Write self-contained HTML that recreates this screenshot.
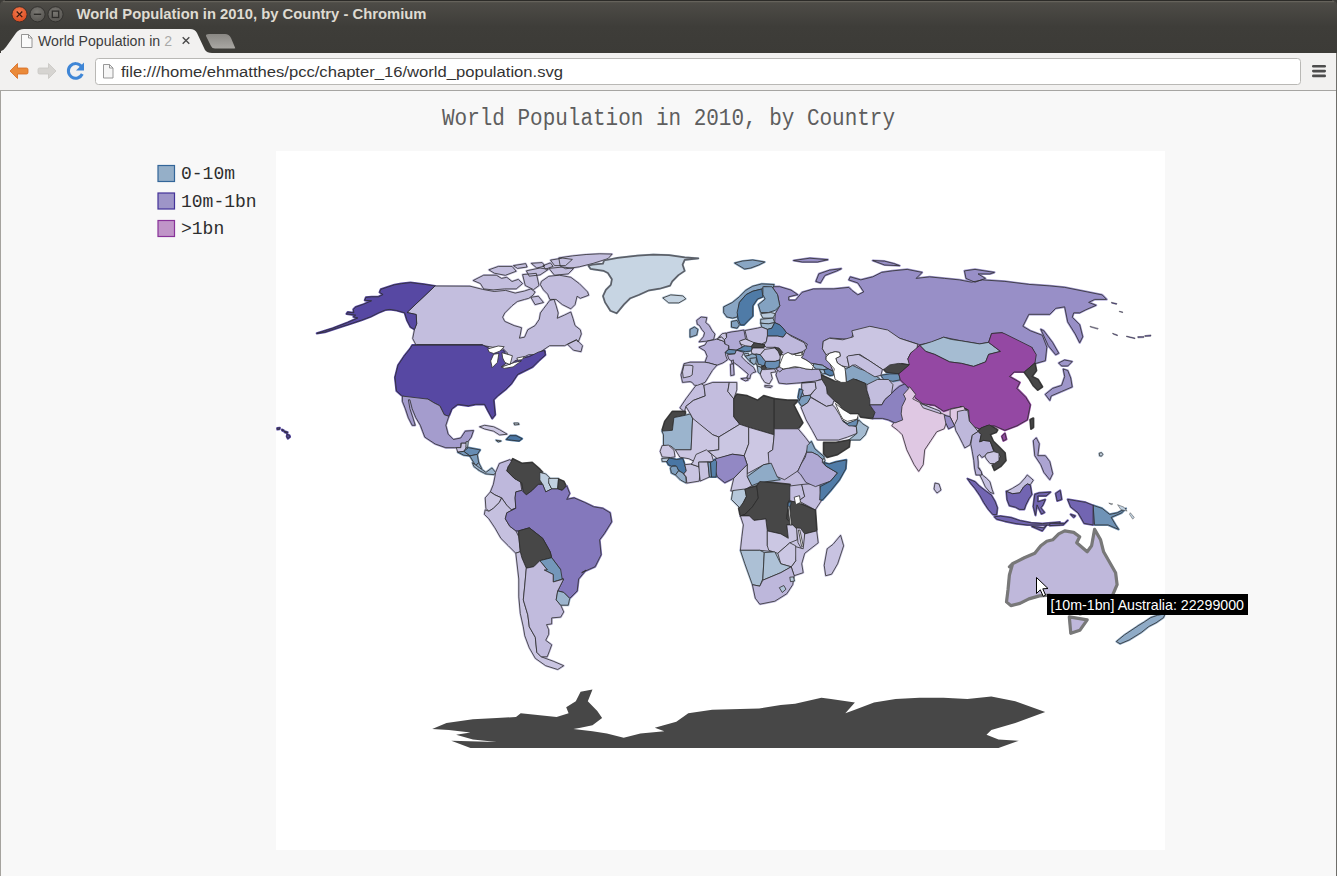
<!DOCTYPE html>
<html><head><meta charset="utf-8">
<style>
html,body{margin:0;padding:0;width:1337px;height:876px;overflow:hidden;background:#f8f8f8;font-family:"Liberation Sans",sans-serif;}
#root{position:absolute;left:0;top:0;width:1337px;height:876px;}
</style></head><body><div id="root">
<svg width="1337" height="876" viewBox="0 0 1337 876" style="position:absolute;left:0;top:0">
<defs>
<linearGradient id="tb" x1="0" y1="0" x2="0" y2="1"><stop offset="0" stop-color="#4f4d48"/><stop offset="0.5" stop-color="#3e3d39"/><stop offset="1" stop-color="#3c3b37"/></linearGradient>
<radialGradient id="cls" cx="0.45" cy="0.35" r="0.7"><stop offset="0" stop-color="#f47d50"/><stop offset="1" stop-color="#d9471d"/></radialGradient>
<radialGradient id="gbt" cx="0.45" cy="0.35" r="0.7"><stop offset="0" stop-color="#7a7873"/><stop offset="1" stop-color="#55534f"/></radialGradient>
<linearGradient id="ntab" x1="0" y1="0" x2="0" y2="1"><stop offset="0" stop-color="#8a8884"/><stop offset="1" stop-color="#a9a7a3"/></linearGradient>
</defs>
<!-- window background/title bar -->
<rect x="0" y="0" width="1337" height="53" fill="#3c3b37"/>
<path d="M0 53 V6 Q0 0 6 0 H1331 Q1337 0 1337 6 V53 Z" fill="url(#tb)"/>
<rect x="5" y="0" width="1327" height="1" fill="#2c2b28"/><rect x="3" y="1.2" width="1331" height="1" fill="#6b6860"/>
<!-- title buttons -->
<circle cx="19.5" cy="14.3" r="7.6" fill="url(#cls)" stroke="#2c2b28" stroke-width="0.8"/>
<path d="M16.7 11.5 L22.3 17.1 M22.3 11.5 L16.7 17.1" stroke="#3a1a10" stroke-width="1.3"/>
<circle cx="37.5" cy="14.3" r="7.6" fill="url(#gbt)" stroke="#2c2b28" stroke-width="0.8"/>
<path d="M33.8 14.3 H41.2" stroke="#2e2d2a" stroke-width="1.4"/>
<circle cx="55.5" cy="14.3" r="7.6" fill="url(#gbt)" stroke="#2c2b28" stroke-width="0.8"/>
<rect x="52.3" y="11.1" width="6.4" height="6.4" fill="none" stroke="#2e2d2a" stroke-width="1.3"/>
<text x="76.5" y="19.4" font-family="Liberation Sans" font-weight="bold" font-size="14.2" fill="#dfdbd2" textLength="350" lengthAdjust="spacingAndGlyphs">World Population in 2010, by Country - Chromium</text>
<!-- tab -->
<path d="M1 53 L1 51 Q4 50 6 47 L16 33 Q19 29 24 29 H190 Q195 29 197 33 L205 50 Q207 53 212 53 Z" fill="#f2f1f0"/>
<path d="M209 34 H225 Q229 34 231 38 L235 47.5 Q236 48.5 234 48.5 H215 Q212 48.5 211 46 L206 36 Q205.5 34 209 34 Z" fill="url(#ntab)"/>
<!-- tab page icon -->
<path d="M21.5 34.5 H28.5 L32 38 V47.5 H21.5 Z" fill="#fafafa" stroke="#8a8a8a" stroke-width="0.9"/>
<path d="M28.5 34.5 V38 H32" fill="none" stroke="#8a8a8a" stroke-width="0.9"/>
<text x="38" y="46" font-family="Liberation Sans" font-size="14" fill="#3c3c3c" textLength="134" lengthAdjust="spacingAndGlyphs">World Population in 2</text>
<rect x="160" y="30" width="18" height="22" fill="#f2f1f0" opacity="0.6"/>
<path d="M182.7 37.2 L189.3 43.8 M189.3 37.2 L182.7 43.8" stroke="#4a4a4a" stroke-width="1.4"/>
<!-- toolbar -->
<rect x="0" y="53" width="1337" height="37" fill="#f2f1f0"/>
<rect x="0" y="90" width="1337" height="1" fill="#a6a5a2"/>
<!-- back arrow -->
<path d="M10 71 L17.5 63.5 L17.5 68 H26.5 Q28 68 28 69.5 V72.5 Q28 74 26.5 74 H17.5 V78.5 Z" fill="#ea8a3a" stroke="#d86a1e" stroke-width="0.8"/>
<!-- fwd arrow -->
<path d="M56 71 L48.5 63.5 L48.5 68 H39.5 Q38 68 38 69.5 V72.5 Q38 74 39.5 74 H48.5 V78.5 Z" fill="#d6d4d1" stroke="#c8c6c3" stroke-width="0.8"/>
<!-- reload -->
<path d="M81.5 66.5 A7.3 7.3 0 1 0 82.3 74" fill="none" stroke="#3f86d6" stroke-width="3"/>
<path d="M84 62.5 V70.5 H76 Z" fill="#3f86d6"/>
<!-- url box -->
<rect x="95.5" y="58.5" width="1205" height="26" rx="3" ry="3" fill="#ffffff" stroke="#b9b8b5" stroke-width="1"/>
<path d="M103.5 64.5 H109.5 L113 68 V78 H103.5 Z" fill="#f6f6f6" stroke="#8c8c8c" stroke-width="0.9"/>
<path d="M109.5 64.5 V68 H113" fill="none" stroke="#8c8c8c" stroke-width="0.9"/>
<text x="121" y="76.5" font-family="Liberation Sans" font-size="15.5" fill="#333333" textLength="442" lengthAdjust="spacingAndGlyphs">file:///home/ehmatthes/pcc/chapter_16/world_population.svg</text>
<!-- menu -->
<rect x="1312" y="65" width="14" height="2.6" rx="1.3" fill="#4d4d4d"/>
<rect x="1312" y="69.8" width="14" height="2.6" rx="1.3" fill="#4d4d4d"/>
<rect x="1312" y="74.6" width="14" height="2.6" rx="1.3" fill="#4d4d4d"/>
<!-- window borders -->
<rect x="0" y="91" width="1" height="785" fill="#a5a39e"/>
<rect x="1336" y="53" width="1" height="823" fill="#6f6e6a"/>
<!-- chart -->
<rect x="276" y="151" width="889" height="699" fill="#ffffff"/>
<text x="442" y="125.2" font-family="Liberation Mono" font-size="23.5" fill="#5e5e5e" textLength="453" lengthAdjust="spacingAndGlyphs">World Population in 2010, by Country</text>
<g font-family="Liberation Mono" font-size="18" fill="#2e2e2e">
<rect x="158" y="165.5" width="16.5" height="16" fill="#95afc8" stroke="#336699" stroke-width="1.2"/>
<text x="181" y="179.3">0-10m</text>
<rect x="158" y="193" width="16.5" height="16" fill="#9e95c8" stroke="#443399" stroke-width="1.2"/>
<text x="181" y="206.8">10m-1bn</text>
<rect x="158" y="220.5" width="16.5" height="16" fill="#c095c8" stroke="#883399" stroke-width="1.2"/>
<text x="181" y="234.3">&gt;1bn</text>
</g>
<g stroke-width="2.2" stroke-linejoin="round"><path d="M889.0 377.0 L906.0 377.0 L907.0 391.0 L889.0 391.0Z" fill="#c3bede" stroke="none"/>
<path d="M939.0 408.0 L953.0 406.0 L953.0 417.0 L939.0 417.0Z" fill="#dfc8e3" stroke="none"/>
<path d="M768.0 471.0 L806.0 469.0 L807.0 488.0 L768.0 487.0Z" fill="#c0badc" stroke="none"/>
<path d="M789.8 539.8 L798.7 539.8 L805.5 550.3 L795.7 550.3 L789.8 544.3Z" fill="#c7c2e1" stroke="none"/>
<path d="M771.9 286.7 L779.8 286.7 L791.0 290.1 L797.7 294.6 L788.7 296.8 L788.7 300.2 L795.5 300.2 L802.2 292.3 L813.4 289.0 L821.9 288.9 L833.9 288.9 L848.8 287.4 L851.8 290.4 L857.8 294.9 L863.8 291.9 L857.8 282.9 L848.8 279.9 L850.3 276.9 L860.8 279.9 L872.7 276.9 L881.7 272.4 L892.2 270.9 L907.2 269.4 L922.1 272.4 L916.1 278.4 L929.6 276.9 L944.5 278.4 L959.5 279.9 L971.5 282.2 L982.4 279.9 L1004.9 281.4 L1028.8 284.4 L1049.8 285.9 L1064.7 287.4 L1087.2 291.9 L1102.1 294.9 L1106.6 299.4 L1094.6 299.4 L1088.6 302.4 L1096.1 305.3 L1085.7 309.8 L1079.7 312.8 L1073.7 312.8 L1072.2 317.3 L1079.7 324.8 L1082.7 336.8 L1079.7 342.7 L1075.2 333.8 L1067.7 321.8 L1064.7 306.8 L1055.7 308.3 L1049.8 314.3 L1028.8 314.3 L1022.8 326.3 L1030.3 330.8 L1042.3 335.3 L1046.8 347.2 L1045.3 360.7 L1034.8 363.7 L1034.8 353.2 L1031.8 347.2 L1030.0 349.9 L1024.5 348.4 L1012.5 339.4 L1002.0 332.7 L991.6 333.5 L988.6 342.4 L979.6 343.9 L961.6 340.9 L943.7 337.2 L931.7 342.4 L919.8 344.7 L898.8 338.0 L886.8 330.5 L870.4 326.7 L853.9 332.0 L850.9 339.4 L830.0 338.0 L823.3 341.1 L822.4 348.7 L826.1 354.7 L826.1 359.9 L829.8 362.9 L832.8 371.1 L828.3 368.9 L822.4 365.2 L813.4 363.7 L810.4 362.9 L805.9 359.9 L801.4 357.7 L802.9 355.4 L805.2 349.4 L807.4 344.2 L802.9 341.2 L792.4 336.0 L786.5 333.0 L783.1 328.2 L779.8 324.9 L774.7 322.6 L775.3 313.7 L779.8 305.8 L777.5 294.6ZM815.9 281.4 L818.9 273.9 L829.4 270.2 L841.3 268.7 L836.8 270.9 L824.9 275.4 L820.4 282.9ZM793.5 260.5 L809.9 258.2 L827.9 259.7 L817.4 262.0 L802.4 262.0ZM872.7 260.5 L884.7 261.2 L893.7 263.5 L899.7 265.7 L884.7 265.0ZM964.5 270.9 L975.0 269.4 L994.4 272.4 L989.9 273.9 L978.0 273.9 L985.4 278.4 L975.0 282.2 L966.0 278.4ZM1040.8 329.3 L1043.8 330.8 L1052.7 342.7 L1058.7 353.2 L1055.7 354.7 L1048.3 345.7Z" fill="#988fc7" stroke="#988fc7"/>
<path d="M823.4 341.2 L829.4 338.3 L842.8 339.8 L853.3 336.8 L851.8 330.8 L869.8 326.3 L887.7 330.0 L899.7 338.3 L917.6 344.2 L916.8 349.9 L910.8 352.9 L907.8 358.9 L910.8 364.9 L901.8 363.4 L889.8 369.4 L882.4 369.4 L868.9 360.4 L859.9 354.4 L856.8 354.7 L847.0 356.9 L849.3 367.4 L841.8 365.9 L837.3 362.9 L835.8 358.4 L840.3 356.2 L839.6 352.4 L835.1 351.7 L829.8 353.2 L826.1 354.7 L822.4 348.7 L823.3 341.1Z" fill="#cac5e2" stroke="#cac5e2"/>
<path d="M435.0 286.0 L470.0 286.2 L482.6 289.4 L494.2 291.5 L505.7 290.4 L515.2 293.1 L524.6 291.0 L530.9 288.9 L535.1 292.0 L533.0 295.2 L528.8 298.3 L524.6 299.4 L517.3 301.5 L512.0 305.7 L504.7 313.0 L502.6 317.2 L504.7 321.4 L514.1 325.6 L521.5 327.7 L520.4 334.0 L519.4 338.2 L524.6 337.2 L527.8 329.8 L535.1 325.6 L539.3 319.3 L540.4 313.0 L543.5 308.8 L546.7 304.6 L549.8 300.4 L554.0 299.4 L556.1 305.7 L558.2 313.0 L557.2 318.3 L564.5 315.1 L570.8 312.0 L572.9 318.3 L575.0 325.6 L580.3 329.8 L581.3 334.0 L578.2 342.0 L576.5 339.8 L564.5 345.7 L549.6 345.7 L540.6 351.7 L545.1 351.7 L543.6 356.2 L534.6 354.7 L528.6 354.7 L519.7 359.2 L512.2 363.7 L504.7 366.7 L501.7 362.2 L507.7 353.2 L501.7 347.2 L492.7 347.2 L483.8 345.7 L482.3 344.5 L416.5 344.5 L416.2 345.3 L412.7 338.5 L414.5 329.4 L416.7 323.7 L416.2 314.5 L407.0 312.5ZM473.2 280.5 L483.7 275.2 L496.3 275.2 L501.5 278.4 L506.8 277.3 L512.0 281.5 L518.3 279.4 L522.5 283.6 L516.2 288.9 L504.7 288.9 L493.1 289.9 L483.7 288.9 L480.5 283.6ZM522.6 274.6 L536.3 273.3 L539.0 285.5 L533.5 289.6 L525.3 285.5ZM541.4 281.5 L548.8 276.3 L559.3 275.2 L570.8 277.3 L579.2 283.6 L587.6 292.0 L588.7 295.2 L580.3 298.3 L577.1 296.2 L575.0 304.6 L570.8 308.8 L562.4 304.6 L556.1 299.4 L549.8 299.4 L547.7 294.1 L543.5 289.9 L540.4 284.7ZM530.9 297.3 L538.3 296.2 L543.5 302.5 L535.1 304.6ZM488.9 269.8 L498.5 266.4 L512.1 266.4 L516.2 271.2 L505.3 275.3 L494.4 273.2ZM513.4 265.6 L525.7 263.6 L527.1 267.0 L517.5 268.4ZM531.3 263.3 L542.2 262.6 L544.9 266.0 L536.8 268.0ZM542.9 265.7 L550.4 262.9 L553.1 266.4 L545.6 269.1ZM550.5 260.1 L562.8 258.1 L572.4 259.4 L565.5 265.6 L554.6 265.6ZM558.8 257.9 L572.5 255.9 L586.1 254.5 L599.8 253.8 L612.1 254.1 L608.0 258.6 L593.0 263.4 L579.3 266.8 L565.7 268.8 L560.2 266.1ZM549.0 268.4 L562.7 267.0 L573.6 268.4 L568.2 273.9 L554.5 275.2ZM526.4 270.8 L540.1 268.0 L548.3 269.4 L540.1 274.9 L529.2 276.2ZM567.5 344.2 L576.5 339.8 L582.5 345.7 L581.0 351.7 L573.5 350.2Z" fill="#c3bede" stroke="#c3bede"/>
<path d="M435.0 286.0 L424.2 284.3 L410.5 282.6 L401.3 283.7 L394.5 284.8 L387.6 287.1 L380.8 289.4 L379.6 292.3 L383.1 294.5 L378.5 296.8 L371.6 296.8 L365.9 297.4 L364.8 300.3 L371.6 300.8 L363.7 304.2 L355.7 307.1 L353.4 309.4 L353.9 312.8 L347.7 312.2 L346.5 313.9 L355.7 315.1 L353.4 316.8 L357.9 317.9 L347.7 322.5 L332.8 328.2 L316.8 333.4 L324.8 332.2 L338.5 327.6 L347.7 324.8 L361.4 320.2 L370.5 316.8 L378.5 312.8 L385.3 310.0 L389.9 309.4 L396.8 310.5 L404.7 312.8 L407.0 320.2 L410.5 327.1 L414.5 329.4 L416.7 323.7 L416.2 314.5 L407.0 312.5Z" fill="#5748a3" stroke="#5748a3"/>
<path d="M412.2 345.2 L483.2 345.2 L487.7 347.5 L493.7 351.2 L502.7 349.7 L505.7 353.5 L511.6 356.5 L507.2 362.4 L501.2 366.9 L508.6 366.9 L514.6 360.9 L523.6 358.0 L529.6 356.5 L538.6 352.0 L544.5 350.5 L545.3 355.0 L538.6 360.9 L532.6 366.9 L523.6 371.4 L517.6 374.4 L511.6 383.4 L505.7 389.4 L498.2 395.3 L493.7 399.8 L495.2 414.8 L492.2 418.5 L487.7 410.3 L484.7 404.3 L475.7 404.3 L468.3 405.8 L457.8 404.3 L451.8 408.8 L448.8 416.3 L444.3 414.8 L439.8 405.8 L433.9 402.8 L427.9 399.1 L420.4 399.8 L409.9 397.6 L402.4 396.1 L396.5 390.9 L395.0 377.4 L398.0 365.4 L403.9 356.5 L409.9 349.0Z" fill="#5748a3" stroke="#5748a3"/>
<path d="M402.4 396.1 L427.9 399.1 L433.9 402.8 L439.8 405.8 L444.3 414.8 L448.8 416.3 L445.8 425.3 L448.1 434.2 L453.3 439.5 L460.8 438.0 L465.3 431.2 L473.5 430.5 L471.2 437.2 L466.8 443.2 L460.8 443.2 L460.8 447.7 L454.8 447.7 L445.8 447.7 L435.3 444.0 L424.9 437.2 L422.6 431.2 L420.4 425.3 L415.9 417.8 L412.2 408.8 L409.9 399.8 L408.4 399.8 L409.9 408.8 L412.9 417.8 L415.2 425.3 L412.2 425.3 L408.4 417.8 L405.4 408.8 L402.4 401.3Z" fill="#a49ccd" stroke="#a49ccd"/>
<path d="M456.3 447.7 L460.8 447.7 L461.5 443.2 L466.8 443.2 L466.0 447.7 L463.8 451.4 L457.8 452.2Z" fill="#cbc6e3" stroke="#cbc6e3"/>
<path d="M466.0 441.7 L468.3 441.7 L467.5 447.7 L466.0 447.7Z" fill="#c4d3e2" stroke="#c4d3e2"/>
<path d="M463.8 451.4 L468.3 447.7 L480.2 449.9 L477.2 454.4 L469.8 455.9Z" fill="#668cb3" stroke="#668cb3"/>
<path d="M457.8 452.2 L463.8 451.4 L469.8 455.9 L463.8 455.2Z" fill="#789abc" stroke="#789abc"/>
<path d="M469.8 455.9 L477.2 454.4 L478.7 462.7 L475.7 465.7Z" fill="#7d9ebe" stroke="#7d9ebe"/>
<path d="M475.7 465.7 L478.7 462.7 L481.7 468.6 L478.7 470.1Z" fill="#8ca8c5" stroke="#8ca8c5"/>
<path d="M479.5 426.8 L484.7 425.3 L493.7 426.8 L499.7 429.8 L507.2 434.2 L499.7 435.0 L493.7 431.2 L484.7 429.0Z" fill="#ccc7e3" stroke="#ccc7e3"/>
<path d="M506.4 439.5 L510.1 435.7 L516.1 435.7 L522.1 438.7 L519.1 441.0 L511.6 440.2Z" fill="#4976a4" stroke="#4976a4"/>
<path d="M495.9 440.2 L501.2 441.0 L498.2 442.0Z" fill="#a5bcd2" stroke="#a5bcd2"/>
<path d="M604.1 260.5 L617.7 257.8 L637.6 255.7 L653.3 254.7 L669.0 255.2 L684.7 257.3 L698.3 258.4 L684.7 259.9 L682.6 264.7 L684.7 270.9 L678.4 275.1 L672.2 281.4 L670.1 285.6 L659.6 288.7 L649.1 290.3 L638.6 295.0 L630.3 298.2 L624.0 304.4 L616.7 313.3 L610.4 310.7 L605.1 302.4 L603.0 296.1 L605.9 289.8 L610.9 284.9 L611.9 279.3 L607.9 273.0 L603.9 270.9 L590.5 268.8 L588.4 265.7 L592.6 264.7 L603.0 263.6Z" fill="#c7d5e3" stroke="#c7d5e3"/>
<path d="M662.8 297.9 L670.8 294.9 L682.8 295.9 L685.8 298.9 L678.8 302.9 L668.8 302.9Z" fill="#c4d3e1" stroke="#c4d3e1"/>
<path d="M734.7 263.0 L742.7 261.0 L752.7 260.0 L764.7 262.0 L758.7 265.0 L750.7 268.0 L744.7 269.0Z" fill="#89a6c4" stroke="#89a6c4"/>
<path d="M472.4 462.7 L479.9 468.0 L485.9 472.4 L491.9 468.0 L495.6 472.4 L494.1 474.7 L485.9 473.9 L479.9 470.9 L473.9 466.5Z" fill="#9bb4cd" stroke="#9bb4cd"/>
<path d="M495.6 472.4 L499.4 463.5 L509.8 459.7 L512.8 462.0 L508.3 466.5 L506.8 470.9 L514.3 478.4 L520.3 481.4 L521.8 490.4 L515.8 491.9 L515.1 497.9 L515.8 508.3 L511.3 509.8 L506.8 505.3 L501.6 497.9 L494.9 494.9 L490.4 491.9 L493.4 484.4 L494.9 476.9Z" fill="#beb8dc" stroke="#beb8dc"/>
<path d="M508.3 466.5 L512.8 459.0 L517.3 461.2 L521.8 463.5 L532.3 462.7 L539.8 469.4 L542.7 472.4 L539.8 479.9 L542.7 484.4 L538.3 484.4 L532.3 490.4 L526.3 494.9 L523.3 491.9 L521.8 482.9 L514.3 478.4 L506.8 470.9Z" fill="#474747" stroke="#474747"/>
<path d="M539.8 472.4 L545.7 473.9 L550.2 478.4 L548.7 482.9 L551.7 488.9 L545.7 491.9 L542.7 484.4 L539.8 479.9Z" fill="#becedf" stroke="#becedf"/>
<path d="M548.7 478.4 L558.5 478.4 L557.7 488.9 L551.7 488.9 L548.7 482.9Z" fill="#c1d1e0" stroke="#c1d1e0"/>
<path d="M558.5 479.2 L563.7 481.4 L565.9 485.9 L562.2 490.4 L557.7 488.9Z" fill="#474747" stroke="#474747"/>
<path d="M490.4 491.9 L494.9 494.9 L501.6 497.9 L499.4 502.4 L493.4 508.3 L488.9 511.3 L485.9 508.3 L485.2 497.9Z" fill="#cbc6e2" stroke="#cbc6e2"/>
<path d="M485.2 509.8 L488.9 511.3 L493.4 508.3 L499.4 502.4 L501.6 497.9 L506.8 505.3 L511.3 509.8 L515.8 508.3 L506.8 512.8 L505.3 518.8 L509.8 526.3 L515.8 530.8 L518.8 536.8 L520.3 551.7 L515.8 553.2 L508.3 545.7 L500.9 538.3 L494.9 527.8 L488.9 518.8 L484.4 514.3Z" fill="#c5c0df" stroke="#c5c0df"/>
<path d="M515.8 491.9 L521.8 490.4 L526.3 494.9 L532.3 490.4 L538.3 484.4 L542.7 484.4 L545.7 491.9 L551.7 488.9 L557.7 488.9 L562.2 490.4 L566.7 485.9 L569.7 493.4 L566.7 499.4 L574.2 497.9 L584.6 502.4 L593.6 506.8 L602.6 508.3 L610.1 512.8 L611.6 521.8 L604.1 533.8 L599.6 539.8 L601.1 554.7 L595.1 566.7 L581.6 572.7 L586.1 570.0 L578.6 579.0 L577.2 590.9 L569.7 598.4 L563.7 592.4 L557.7 590.9 L563.7 579.0 L553.2 574.5 L560.7 569.7 L551.7 557.7 L550.2 551.7 L542.7 538.3 L529.3 527.8 L518.8 530.8 L515.8 530.8 L509.8 526.3 L505.3 518.8 L506.8 512.8 L515.8 508.3 L515.1 497.9Z" fill="#8478bc" stroke="#8478bc"/>
<path d="M518.8 530.8 L529.3 527.8 L542.7 538.3 L550.2 551.7 L551.7 557.7 L539.8 560.7 L533.8 566.7 L526.3 568.2 L521.8 557.7 L520.3 551.7 L518.8 536.8Z" fill="#474747" stroke="#474747"/>
<path d="M539.8 560.7 L551.7 557.7 L560.7 569.7 L562.2 579.0 L553.2 582.0 L553.2 574.5 L544.2 570.0 L547.2 569.7Z" fill="#7497ba" stroke="#7497ba"/>
<path d="M520.3 551.7 L521.8 557.7 L526.3 568.2 L524.8 585.0 L523.3 599.9 L527.8 614.9 L529.3 626.8 L535.3 637.3 L536.8 652.3 L541.2 656.8 L553.2 661.2 L563.7 665.7 L557.7 669.5 L545.7 665.7 L535.3 658.3 L529.3 647.8 L524.8 635.8 L523.3 626.8 L520.3 613.4 L518.8 596.9 L518.8 579.0 L515.8 553.2Z" fill="#cac5e2" stroke="#cac5e2"/>
<path d="M526.3 568.2 L533.8 566.7 L539.8 560.7 L547.2 569.7 L544.2 570.0 L553.2 574.5 L553.2 582.0 L563.7 579.0 L557.7 590.9 L556.2 599.9 L560.7 605.2 L563.7 611.9 L560.7 617.1 L551.7 617.9 L551.7 623.9 L546.5 624.6 L548.7 629.8 L548.7 634.3 L545.7 640.3 L551.7 644.8 L549.5 650.8 L547.2 656.8 L541.2 656.8 L536.8 652.3 L535.3 637.3 L529.3 626.8 L527.8 614.9 L523.3 599.9 L524.8 585.0Z" fill="#c1bbdd" stroke="#c1bbdd"/>
<path d="M557.7 590.9 L563.7 592.4 L569.7 598.4 L568.2 605.2 L560.7 605.2 L556.2 599.9Z" fill="#9cb5ce" stroke="#9cb5ce"/>
<path d="M723.7 306.9 L732.6 302.4 L739.4 296.8 L746.1 290.1 L752.8 286.2 L761.8 283.9 L774.1 284.5 L773.0 287.9 L764.0 286.7 L761.8 289.0 L752.8 291.2 L746.1 294.6 L739.4 302.4 L738.2 311.4 L737.1 317.0 L732.6 318.1 L727.0 317.0 L723.7 312.5Z" fill="#89a6c4" stroke="#89a6c4"/>
<path d="M739.4 302.4 L746.1 294.6 L752.8 291.2 L761.8 289.0 L762.9 296.8 L757.3 299.1 L752.8 305.8 L752.8 315.9 L748.3 320.4 L743.9 324.9 L740.5 324.9 L738.2 319.3 L737.1 312.5Z" fill="#4f7ba7" stroke="#4f7ba7"/>
<path d="M762.9 286.7 L771.9 286.7 L777.5 294.6 L779.8 305.8 L775.3 310.3 L768.5 312.5 L760.7 312.5 L758.4 304.7 L765.2 299.1 L762.9 294.6Z" fill="#83a2c1" stroke="#83a2c1"/>
<path d="M760.7 313.7 L770.8 312.5 L775.3 313.7 L773.0 318.1 L762.9 318.1Z" fill="#b7c9db" stroke="#b7c9db"/>
<path d="M760.7 319.3 L773.0 318.1 L774.7 322.6 L768.5 323.8 L760.7 323.2Z" fill="#acc0d5" stroke="#acc0d5"/>
<path d="M760.7 323.2 L768.5 323.8 L774.7 322.6 L771.9 328.2 L767.4 329.4 L761.8 327.1Z" fill="#9eb6ce" stroke="#9eb6ce"/>
<path d="M767.4 329.4 L771.9 328.2 L774.7 322.6 L779.8 324.9 L783.1 328.2 L786.5 332.7 L783.1 337.2 L777.5 336.1 L767.4 336.1Z" fill="#4e7aa6" stroke="#4e7aa6"/>
<path d="M745.0 330.5 L757.3 328.2 L761.8 327.1 L767.4 329.4 L767.4 336.1 L766.3 341.7 L761.8 344.0 L752.8 342.8 L747.2 339.5Z" fill="#c1bcdd" stroke="#c1bcdd"/>
<path d="M731.5 321.5 L737.1 320.4 L739.4 324.9 L737.1 328.2 L731.5 327.1Z" fill="#81a1c0" stroke="#81a1c0"/>
<path d="M696.7 320.4 L701.2 317.0 L706.8 317.6 L705.7 322.6 L709.1 325.4 L711.9 330.5 L714.9 334.1 L713.6 339.5 L706.8 341.1 L699.0 341.9 L703.5 336.7 L704.6 332.7 L701.8 329.4 L699.5 325.4 L697.3 324.3Z" fill="#b8b2d8" stroke="#b8b2d8"/>
<path d="M690.0 329.4 L694.5 327.1 L697.9 329.4 L696.7 335.0 L690.0 337.2Z" fill="#8eaac7" stroke="#8eaac7"/>
<path d="M766.3 341.7 L767.4 336.1 L777.5 336.1 L783.1 337.2 L786.5 332.7 L791.0 336.1 L804.4 342.8 L806.7 348.4 L801.1 352.9 L795.5 354.0 L788.7 354.0 L784.2 356.3 L779.8 351.8 L775.3 347.3 L766.3 347.3 L764.0 345.1Z" fill="#beb8dc" stroke="#beb8dc"/>
<path d="M679.9 407.9 L685.9 398.9 L694.9 386.9 L699.4 382.4 L703.9 385.4 L705.3 395.9 L693.4 400.4 L685.9 406.4 L684.4 411.6Z" fill="#c4bedf" stroke="#c4bedf"/>
<path d="M662.0 431.1 L665.0 421.3 L672.4 411.6 L685.2 411.6 L685.2 415.3 L673.9 417.6 L672.4 430.3Z" fill="#474747" stroke="#474747"/>
<path d="M662.0 431.1 L672.4 430.3 L673.9 417.6 L685.2 415.3 L690.4 413.9 L692.6 418.3 L691.1 449.8 L675.4 449.8 L670.9 446.0 L663.5 445.3 L663.5 434.8Z" fill="#9bb4cd" stroke="#9bb4cd"/>
<path d="M685.9 406.4 L693.4 400.4 L705.3 395.9 L703.9 385.4 L712.8 382.4 L729.3 382.4 L727.8 391.4 L733.8 398.9 L733.8 416.8 L739.8 424.3 L718.8 437.0 L712.8 434.8 L693.4 419.8 L690.4 413.9Z" fill="#c3bdde" stroke="#c3bdde"/>
<path d="M729.3 382.4 L736.8 382.4 L736.8 389.9 L733.8 398.9 L727.8 391.4Z" fill="#ccc8e3" stroke="#ccc8e3"/>
<path d="M733.8 398.9 L736.8 394.4 L747.2 395.9 L757.7 400.4 L763.7 395.9 L774.2 398.9 L774.2 434.8 L748.7 427.3 L739.8 424.3 L733.8 416.8Z" fill="#474747" stroke="#474747"/>
<path d="M774.2 398.9 L787.6 400.4 L798.1 400.4 L793.6 404.9 L802.6 422.8 L798.1 428.8 L774.2 428.8Z" fill="#474747" stroke="#474747"/>
<path d="M675.4 449.8 L691.1 449.8 L692.6 418.3 L712.8 434.8 L718.8 437.0 L718.8 449.8 L708.3 451.2 L700.9 455.7 L694.9 461.7 L688.9 458.7 L679.9 457.2Z" fill="#cbc6e2" stroke="#cbc6e2"/>
<path d="M718.8 437.0 L739.8 424.3 L748.7 427.3 L748.7 443.8 L744.2 455.7 L732.3 454.2 L717.3 458.7 L708.3 451.2 L718.8 449.8Z" fill="#cac6e2" stroke="#cac6e2"/>
<path d="M748.7 427.3 L774.2 434.8 L772.7 449.8 L768.2 452.7 L771.2 463.2 L763.7 464.7 L747.2 473.7 L747.2 464.7 L744.2 455.7 L748.7 443.8Z" fill="#ccc7e3" stroke="#ccc7e3"/>
<path d="M774.2 428.8 L798.1 428.8 L805.6 437.8 L810.1 443.8 L805.6 454.2 L798.1 470.7 L784.6 479.7 L769.7 473.7 L768.2 452.7 L772.7 449.8 L774.2 434.8Z" fill="#c0badc" stroke="#c0badc"/>
<path d="M715.8 458.7 L732.3 454.2 L744.2 455.7 L747.2 464.7 L741.2 470.7 L733.8 478.2 L724.8 482.7 L717.3 476.7 L714.3 467.7Z" fill="#9288c4" stroke="#9288c4"/>
<path d="M747.2 476.7 L763.7 464.7 L771.2 463.2 L777.2 476.7 L780.1 479.7 L759.2 482.7 L751.7 485.7Z" fill="#8fabc7" stroke="#8fabc7"/>
<path d="M733.8 478.2 L741.2 470.7 L747.2 464.7 L747.2 476.7 L751.7 485.7 L742.7 491.0 L730.8 491.0Z" fill="#c9c4e1" stroke="#c9c4e1"/>
<path d="M732.9 490.5 L744.9 489.0 L746.4 496.5 L743.4 502.4 L740.4 508.4 L731.4 499.4Z" fill="#b5c7da" stroke="#b5c7da"/>
<path d="M738.9 508.4 L743.4 502.4 L746.4 496.5 L744.9 489.0 L756.8 486.0 L758.3 498.0 L752.4 506.9 L744.9 514.4 L740.4 515.9Z" fill="#474747" stroke="#474747"/>
<path d="M756.8 486.0 L759.8 481.5 L789.8 484.5 L792.7 492.0 L788.3 502.4 L786.8 518.9 L792.7 524.9 L786.8 524.9 L788.3 538.3 L780.8 533.9 L767.3 530.9 L765.8 518.9 L753.9 520.4 L749.4 515.9 L740.4 515.9 L744.9 514.4 L752.4 506.9 L758.3 498.0Z" fill="#474747" stroke="#474747"/>
<path d="M789.8 486.0 L801.7 484.5 L804.7 496.5 L797.2 502.4 L789.8 500.9Z" fill="#c3bedf" stroke="#c3bedf"/>
<path d="M801.7 484.5 L819.7 483.0 L821.2 500.9 L815.2 509.9 L798.7 500.9 L804.7 496.5Z" fill="#c1bbdd" stroke="#c1bbdd"/>
<path d="M789.8 500.9 L797.2 502.4 L815.2 509.9 L816.7 530.9 L804.7 533.9 L797.2 529.4 L792.7 524.9 L786.8 518.9 L788.3 502.4Z" fill="#474747" stroke="#474747"/>
<path d="M788.3 502.4 L791.2 501.7 L789.8 509.9 L787.5 508.4Z" fill="#547faa" stroke="#547faa"/>
<path d="M740.4 515.9 L749.4 515.9 L753.9 520.4 L765.8 518.9 L767.3 530.9 L767.3 545.8 L774.8 551.8 L759.8 550.3 L740.4 550.3 L741.9 536.8 L743.4 524.9Z" fill="#c9c4e2" stroke="#c9c4e2"/>
<path d="M767.3 530.9 L780.8 533.9 L788.3 538.3 L786.8 524.9 L792.7 524.9 L797.2 529.4 L797.2 539.8 L789.8 542.8 L777.8 553.3 L768.8 550.3 L767.3 545.8Z" fill="#cbc7e3" stroke="#cbc7e3"/>
<path d="M796.5 527.9 L800.5 528.2 L804.7 533.9 L805.0 548.1 L802.5 550.3 L798.0 542.8Z" fill="#cbc6e2" stroke="#cbc6e2"/>
<path d="M804.7 533.9 L816.7 530.9 L818.2 542.8 L804.7 553.3 L801.7 563.8 L803.2 572.7 L794.2 575.7 L791.2 566.8 L795.7 560.8 L792.7 545.8 L803.2 548.8Z" fill="#c7c2e1" stroke="#c7c2e1"/>
<path d="M777.8 553.3 L789.8 542.8 L795.7 545.8 L795.7 560.8 L791.2 566.8 L780.8 563.8Z" fill="#cbc7e3" stroke="#cbc7e3"/>
<path d="M740.4 550.3 L759.8 550.3 L764.3 552.6 L762.8 578.7 L759.8 586.2 L752.4 584.7 L744.9 563.8Z" fill="#acc0d5" stroke="#acc0d5"/>
<path d="M764.3 552.6 L774.8 551.8 L780.8 563.8 L791.2 566.8 L780.8 572.7 L762.8 580.2Z" fill="#aec2d7" stroke="#aec2d7"/>
<path d="M752.4 584.7 L759.8 586.2 L762.8 580.2 L780.8 572.7 L791.2 566.8 L794.2 575.7 L792.7 584.7 L786.8 593.7 L774.8 601.2 L759.8 604.2 L755.3 598.2Z" fill="#bdb7db" stroke="#bdb7db"/>
<path d="M824.2 565.3 L827.2 548.8 L833.1 544.3 L840.6 535.3 L843.6 545.8 L837.6 563.8 L831.6 574.2 L825.7 575.7Z" fill="#c8c3e1" stroke="#c8c3e1"/>
<path d="M919.8 345.4 L931.7 341.7 L943.7 337.2 L951.2 339.4 L961.6 340.9 L979.6 343.9 L988.6 342.4 L1000.5 351.4 L988.6 354.4 L985.6 361.9 L973.6 366.4 L961.6 363.4 L949.7 361.9 L934.7 354.4 L925.7 351.4Z" fill="#a5bcd2" stroke="#a5bcd2"/>
<path d="M883.9 369.4 L889.8 364.9 L898.8 363.4 L909.3 364.9 L898.8 373.9 L886.8 372.4Z" fill="#474747" stroke="#474747"/>
<path d="M880.9 375.3 L889.8 373.9 L898.8 373.9 L900.3 379.8 L892.8 381.3 L883.9 379.8Z" fill="#6d91b6" stroke="#6d91b6"/>
<path d="M910.8 352.9 L919.8 345.4 L925.7 351.4 L934.7 354.4 L949.7 361.9 L961.6 363.4 L973.6 366.4 L985.6 361.9 L988.6 354.4 L1000.5 351.4 L988.6 342.4 L991.6 333.5 L1002.0 332.7 L1004.9 333.8 L1019.8 341.2 L1031.8 347.2 L1036.3 354.7 L1034.8 363.7 L1034.8 363.0 L1024.3 372.0 L1013.9 372.0 L1009.4 376.5 L1019.8 382.4 L1016.8 388.4 L1025.8 397.4 L1030.3 404.9 L1027.3 419.8 L1016.8 425.8 L1004.9 430.3 L994.4 425.8 L986.9 425.8 L979.4 428.8 L974.5 427.1 L969.3 421.1 L968.6 410.0 L960.0 406.4 L967.6 409.8 L961.6 406.8 L952.7 408.3 L943.7 411.2 L934.7 405.3 L922.7 403.8 L915.3 397.8 L907.8 387.3 L900.3 379.8 L898.8 373.9 L909.3 364.9 L907.8 358.9ZM1001.9 436.3 L1004.9 433.3 L1006.4 439.3 L1003.4 440.8Z" fill="#9448a3" stroke="#9448a3"/>
<path d="M1024.3 372.0 L1034.8 363.0 L1036.3 370.5 L1031.8 376.5 L1037.8 379.4 L1042.3 386.9 L1037.8 389.9 L1033.3 385.4 L1028.8 378.0Z" fill="#474747" stroke="#474747"/>
<path d="M1045.3 394.4 L1052.7 388.4 L1061.7 385.4 L1064.7 376.5 L1063.2 369.0 L1067.7 370.5 L1070.7 378.0 L1072.2 386.9 L1061.7 391.4 L1051.2 395.9 L1049.8 400.4ZM1058.7 363.0 L1064.7 360.0 L1072.2 361.5 L1067.7 366.0 L1061.7 366.0Z" fill="#9e96ca" stroke="#9e96ca"/>
<path d="M1030.3 419.8 L1033.3 418.3 L1033.3 427.3 L1031.1 428.8Z" fill="#474747" stroke="#474747"/>
<path d="M1033.3 440.8 L1036.3 437.8 L1039.3 443.8 L1037.8 455.7 L1045.3 455.7 L1049.8 461.7 L1052.7 473.7 L1049.8 479.7 L1043.8 472.2 L1040.8 464.7 L1034.8 455.7Z" fill="#aca4d2" stroke="#aca4d2"/>
<path d="M1093.1 505.4 L1102.1 508.4 L1109.6 514.4 L1117.1 512.9 L1126.0 508.4 L1121.6 512.9 L1111.1 517.4 L1115.6 524.9 L1118.6 529.4 L1108.1 524.9 L1094.6 524.9Z" fill="#6f93b7" stroke="#6f93b7"/>
<path d="M1009.4 566.8 L1012.4 563.8 L1024.3 557.8 L1034.8 553.3 L1040.8 545.8 L1046.8 541.3 L1052.7 539.8 L1058.7 533.9 L1064.7 530.9 L1073.7 532.4 L1079.7 536.8 L1076.7 542.8 L1087.2 551.8 L1091.6 545.8 L1094.6 529.4 L1100.6 539.8 L1103.6 551.8 L1109.6 562.3 L1115.6 572.7 L1117.1 584.7 L1112.6 595.2 L1108.1 599.7 L1108.2 595.9 L1100.7 609.4 L1079.8 613.9 L1069.3 609.4 L1058.8 598.9 L1049.8 595.2 L1039.4 595.9 L1028.9 598.9 L1019.9 603.4 L1010.9 605.6 L1006.5 601.9 L1008.0 589.9 L1009.4 575.0 L1012.4 564.5Z" fill="#bfb8db" stroke="#bfb8db"/>
<path d="M1069.3 616.8 L1087.2 619.8 L1079.8 630.3 L1070.8 633.3Z" fill="#bfb8db" stroke="#bfb8db"/>
<path d="M1116.4 641.5 L1124.6 634.8 L1138.1 625.8 L1144.1 622.1 L1150.8 617.6 L1157.5 615.3 L1165.0 613.9 L1163.5 617.6 L1156.0 622.8 L1148.6 626.6 L1141.1 632.6 L1129.1 640.0 L1120.1 643.8Z" fill="#8fabc7" stroke="#8fabc7"/>
<path d="M900.8 389.9 L909.8 386.9 L915.7 394.4 L912.7 398.9 L921.7 403.4 L936.7 410.9 L945.7 415.3 L947.2 419.8 L944.2 428.8 L936.7 431.8 L930.7 440.8 L924.7 449.8 L923.2 464.7 L918.7 471.4 L914.2 464.7 L906.8 449.8 L902.3 434.8 L897.8 430.3 L891.8 425.8 L894.8 421.3 L899.3 416.8 L893.3 410.9 L900.8 403.4 L903.8 395.9ZM950.1 409.4 L963.6 406.4 L966.6 412.4 L957.6 419.8 L954.6 425.8 L950.1 416.8Z" fill="#dfc8e3" stroke="#dfc8e3"/>
<path d="M920.2 403.4 L939.7 410.9 L941.2 413.9 L923.2 407.9Z" fill="#c5bfdf" stroke="#c5bfdf"/>
<path d="M944.2 415.3 L950.1 416.8 L954.6 425.8 L948.6 428.8 L945.7 422.8Z" fill="#968cc6" stroke="#968cc6"/>
<path d="M935.0 483.0 L939.0 484.0 L941.0 490.0 L937.0 493.0 L934.0 489.0Z" fill="#c8c3e1" stroke="#c8c3e1"/>
<path d="M777.5 370.4 L788.7 368.1 L799.9 367.4 L805.9 368.9 L811.9 369.6 L819.4 368.9 L820.9 373.4 L822.4 378.6 L814.9 381.6 L805.9 382.4 L796.2 383.1 L786.5 383.9 L779.0 383.1 L776.0 374.9Z" fill="#b4add6" stroke="#b4add6"/>
<path d="M813.4 363.7 L822.4 365.2 L828.3 368.9 L823.9 369.6 L816.4 368.9 L813.4 366.6Z" fill="#8fabc7" stroke="#8fabc7"/>
<path d="M819.4 369.6 L823.9 369.6 L825.3 373.4 L822.4 374.1Z" fill="#a0b8d0" stroke="#a0b8d0"/>
<path d="M823.9 369.6 L828.3 368.9 L832.8 371.1 L834.3 374.9 L829.8 375.6 L825.3 373.4Z" fill="#537ea9" stroke="#537ea9"/>
<path d="M841.8 365.9 L846.3 368.9 L852.3 365.2 L859.8 368.9 L870.0 371.9 L874.7 374.9 L882.2 380.9 L874.7 386.8 L865.7 383.9 L856.0 379.4 L846.3 382.4 L845.5 371.9Z" fill="#88a5c3" stroke="#88a5c3"/>
<path d="M847.0 356.9 L849.3 367.4 L852.3 365.2 L855.5 364.9 L867.4 372.4 L874.9 376.8 L880.9 375.3 L882.4 369.4 L868.9 360.4 L858.4 354.4 L848.0 355.9Z" fill="#c5c0e0" stroke="#c5c0e0"/>
<path d="M821.2 375.0 L833.9 381.0 L847.4 381.7 L853.3 378.7 L865.3 383.2 L866.8 390.0 L869.8 399.7 L869.8 404.9 L875.0 412.4 L872.8 418.4 L860.8 416.9 L858.6 413.9 L850.3 413.9 L842.9 409.4 L838.4 403.4 L833.9 400.4 L827.2 393.7 L826.4 387.0 L821.9 379.5Z" fill="#474747" stroke="#474747"/>
<path d="M801.7 382.5 L815.9 381.0 L821.9 379.5 L826.4 387.0 L827.2 393.7 L833.9 400.4 L832.4 404.9 L826.4 406.4 L811.5 397.4 L810.0 395.9 L815.9 388.5 L815.2 382.5Z" fill="#c4bfdf" stroke="#c4bfdf"/>
<path d="M801.7 383.2 L815.2 382.1 L815.9 388.5 L810.0 395.2 L804.0 395.9 L801.7 390.0Z" fill="#c9c4e1" stroke="#c9c4e1"/>
<path d="M800.2 397.4 L804.0 395.9 L810.0 395.2 L810.7 397.4 L807.7 402.7 L801.7 406.4 L798.7 401.9Z" fill="#7b9cbd" stroke="#7b9cbd"/>
<path d="M799.5 389.2 L803.2 390.0 L801.7 394.4 L799.5 400.4 L798.0 397.4Z" fill="#668cb3" stroke="#668cb3"/>
<path d="M801.0 407.2 L807.7 402.7 L810.7 397.4 L826.4 406.4 L832.4 404.9 L835.4 407.9 L839.9 415.4 L842.9 421.4 L847.4 424.4 L856.3 426.6 L857.1 433.3 L847.4 437.1 L838.4 440.0 L817.4 440.0 L812.2 430.3 L806.2 419.9Z" fill="#c6c1e0" stroke="#c6c1e0"/>
<path d="M842.9 420.6 L847.4 423.6 L856.3 419.9 L857.8 416.9 L857.1 425.9 L848.9 425.9Z" fill="#688db3" stroke="#688db3"/>
<path d="M856.3 426.6 L858.6 419.9 L862.3 423.6 L868.3 427.4 L865.3 434.8 L860.1 440.0 L848.9 440.0 L857.1 433.3Z" fill="#a4bbd1" stroke="#a4bbd1"/>
<path d="M866.8 384.7 L877.3 379.5 L888.5 379.5 L893.0 384.7 L891.5 393.7 L884.8 399.7 L881.8 404.9 L869.8 404.9 L869.8 399.7 L866.8 390.0Z" fill="#c3bede" stroke="#c3bede"/>
<path d="M869.8 404.9 L881.8 404.9 L884.8 399.7 L891.5 393.7 L895.0 390.0 L899.7 386.2 L904.9 384.0 L908.7 388.5 L903.5 394.4 L905.7 398.9 L902.0 406.4 L901.2 413.9 L902.7 419.9 L895.0 422.9 L888.5 419.9 L882.5 418.4 L872.8 418.4 L875.0 412.4Z" fill="#8c82c0" stroke="#8c82c0"/>
<path d="M975.7 467.5 L979.4 468.2 L982.4 475.0 L986.2 478.0 L989.9 481.7 L992.2 489.9 L993.7 493.7 L989.9 492.2 L985.4 486.9 L982.4 480.2 L980.2 475.7 L975.7 470.5ZM1006.4 491.4 L1012.4 488.4 L1019.8 483.9 L1025.1 478.0 L1027.3 475.0 L1033.3 480.2 L1030.3 484.7 L1027.3 483.9 L1023.6 486.9 L1019.8 492.9 L1012.4 493.7Z" fill="#c5c0e0" stroke="#c5c0e0"/>
<path d="M967.5 478.7 L975.0 481.7 L979.4 486.2 L986.2 491.4 L991.4 495.2 L995.2 501.9 L997.4 507.9 L996.6 514.6 L992.9 514.6 L988.4 509.4 L983.9 502.6 L980.2 495.9 L975.0 488.4 L971.2 483.9ZM1006.4 491.4 L1012.4 493.7 L1019.8 492.9 L1023.6 486.9 L1027.3 483.9 L1030.3 485.4 L1031.8 494.4 L1028.8 498.9 L1025.8 504.9 L1024.3 509.4 L1019.8 509.4 L1015.3 507.1 L1009.4 505.6 L1007.1 499.6ZM1034.8 494.4 L1039.3 492.9 L1050.5 492.2 L1046.0 495.9 L1037.8 495.9 L1037.8 501.9 L1045.3 499.6 L1043.0 504.9 L1040.8 507.9 L1044.5 512.4 L1041.5 513.9 L1039.3 509.4 L1037.0 504.9 L1035.5 515.3 L1033.3 506.4ZM994.4 516.8 L1000.4 516.1 L1010.9 517.6 L1019.8 520.6 L1031.1 522.8 L1042.3 523.6 L1060.0 522.1 L1060.0 525.0 L1042.3 525.0 L1027.3 525.0 L1016.1 523.6 L1004.9 521.3 L996.6 519.1Z" fill="#7265b2" stroke="#7265b2"/>
<path d="M1067.7 499.4 L1076.7 500.9 L1085.7 502.4 L1093.1 505.4 L1093.1 524.9 L1084.2 523.4 L1078.2 512.9 L1070.7 506.9ZM1049.8 523.4 L1064.7 523.4 L1067.7 520.4 L1063.2 524.9 L1049.8 525.6ZM1031.8 526.4 L1043.8 527.9 L1046.8 524.9 L1042.3 530.9ZM1055.7 493.5 L1060.2 490.5 L1061.7 499.4 L1057.2 500.9ZM1070.7 514.4 L1075.2 515.9 L1073.7 517.4Z" fill="#7265b2" stroke="#7265b2"/>
<path d="M807.3 445.5 L811.4 441.4 L814.9 448.9 L819.7 453.0 L824.5 457.1 L822.4 459.2 L817.6 455.1 L812.1 452.3 L806.6 452.3Z" fill="#85a4c2" stroke="#85a4c2"/>
<path d="M821.7 459.9 L824.5 458.5 L825.1 461.2 L822.4 462.6Z" fill="#bccdde" stroke="#bccdde"/>
<path d="M806.6 452.3 L812.1 452.3 L817.6 455.1 L822.4 459.2 L822.4 462.6 L825.8 466.0 L837.5 472.9 L830.6 481.1 L821.0 484.5 L815.5 486.6 L806.0 482.5 L800.5 474.2 L797.7 471.5 L801.2 464.0 L805.3 457.1Z" fill="#b0a9d4" stroke="#b0a9d4"/>
<path d="M823.8 462.6 L829.2 464.0 L836.1 461.9 L846.4 459.9 L845.7 468.8 L839.5 479.7 L830.6 490.7 L822.4 500.0 L819.7 500.0 L820.3 486.6 L830.6 481.1 L837.5 472.9 L825.8 466.0Z" fill="#507ca8" stroke="#507ca8"/>
<path d="M823.8 442.7 L836.1 442.7 L849.8 440.0 L849.1 446.8 L837.5 454.4 L827.2 457.1 L823.8 453.7Z" fill="#474747" stroke="#474747"/>
<path d="M662.2 445.6 L668.4 445.1 L674.0 450.3 L675.0 456.9 L670.4 457.5 L662.2 456.9 L660.1 451.3Z" fill="#ccc7e3" stroke="#ccc7e3"/>
<path d="M661.7 458.5 L669.4 458.0 L666.8 461.6 L662.2 461.6Z" fill="#b5c7da" stroke="#b5c7da"/>
<path d="M666.8 461.6 L669.4 458.0 L676.6 459.5 L682.7 458.5 L684.8 464.7 L686.3 470.8 L683.8 473.9 L679.1 470.8 L675.5 465.7 L671.4 466.2 L668.4 464.7Z" fill="#4976a4" stroke="#4976a4"/>
<path d="M670.4 468.2 L671.9 466.2 L676.6 466.2 L678.6 470.8 L675.5 474.9 L671.4 472.9Z" fill="#7d9ebe" stroke="#7d9ebe"/>
<path d="M675.5 474.9 L678.6 470.8 L682.7 472.9 L685.8 477.0 L686.3 483.1 L680.7 480.1Z" fill="#95afca" stroke="#95afca"/>
<path d="M684.8 464.7 L691.0 464.1 L698.7 466.7 L700.2 470.8 L699.2 481.1 L686.8 483.1 L686.3 477.0 L683.8 473.9 L686.3 470.8Z" fill="#c9c4e1" stroke="#c9c4e1"/>
<path d="M692.5 463.1 L696.1 454.4 L706.4 449.8 L711.5 454.4 L713.6 461.6 L698.7 462.1 L698.7 466.7 L691.0 464.1Z" fill="#cac5e2" stroke="#cac5e2"/>
<path d="M698.7 462.1 L707.9 462.1 L709.4 477.0 L700.2 481.1 L699.2 470.8Z" fill="#c7c2e0" stroke="#c7c2e0"/>
<path d="M707.9 462.1 L710.5 462.6 L711.5 477.0 L709.4 477.0Z" fill="#7b9cbd" stroke="#7b9cbd"/>
<path d="M710.5 462.6 L715.0 459.5 L716.6 461.6 L716.1 477.0 L711.5 477.0Z" fill="#5781ab" stroke="#5781ab"/>
<path d="M699.0 347.2 L705.0 345.0 L707.2 341.2 L714.7 339.7 L716.9 339.0 L723.7 341.2 L728.9 345.7 L728.1 349.4 L725.2 352.4 L725.9 356.2 L727.4 359.9 L722.9 362.9 L716.9 365.2 L708.7 362.9 L705.0 362.2 L707.2 356.2 L705.0 350.9Z" fill="#b7b0d8" stroke="#b7b0d8"/>
<path d="M690.0 362.2 L705.0 362.2 L708.7 362.9 L716.9 365.2 L712.4 370.4 L708.7 376.4 L705.0 382.4 L697.5 385.3 L694.5 385.3 L692.2 382.4 L690.0 381.6 L682.5 382.4 L681.0 374.9 L684.0 363.7Z" fill="#beb8dc" stroke="#beb8dc"/>
<path d="M684.0 365.2 L690.0 365.2 L693.0 365.9 L692.2 374.9 L690.0 376.4 L683.3 377.9 L682.5 371.9Z" fill="#ccc8e3" stroke="#ccc8e3"/>
<path d="M716.9 339.0 L721.4 336.7 L724.4 339.7 L725.2 344.2 L723.7 341.2Z" fill="#ccc8e3" stroke="#ccc8e3"/>
<path d="M718.4 337.5 L722.2 333.7 L725.9 333.0 L726.6 337.5 L724.4 339.7 L721.4 336.7Z" fill="#cac5e2" stroke="#cac5e2"/>
<path d="M726.6 333.0 L731.9 331.9 L737.9 331.1 L743.9 330.0 L745.3 337.5 L746.1 339.7 L740.9 340.5 L740.1 343.5 L742.4 347.2 L736.4 350.2 L728.9 349.4 L728.9 345.7 L725.2 344.2 L724.4 339.7 L726.6 337.5Z" fill="#b0a9d4" stroke="#b0a9d4"/>
<path d="M725.2 352.4 L728.9 349.4 L736.4 350.2 L734.9 353.9 L728.9 353.9Z" fill="#648bb1" stroke="#648bb1"/>
<path d="M727.4 354.7 L734.9 353.9 L736.4 350.2 L743.9 352.4 L742.4 355.4 L741.6 356.9 L746.8 362.2 L753.6 367.4 L755.8 371.9 L752.8 372.6 L750.6 374.9 L749.8 378.6 L746.8 377.9 L748.3 374.1 L743.9 370.4 L738.6 365.9 L733.4 362.2 L728.9 359.2ZM740.9 378.6 L746.8 377.9 L748.3 380.1 L745.3 380.9ZM730.4 364.4 L733.4 363.7 L734.1 374.9 L730.8 375.6Z" fill="#b9b2d9" stroke="#b9b2d9"/>
<path d="M731.5 360.7 L733.4 359.9 L733.4 363.7 L731.9 363.7Z" fill="#b7b0d8" stroke="#b7b0d8"/>
<path d="M736.4 350.2 L742.4 347.2 L745.3 345.7 L752.1 346.5 L751.3 350.9 L745.3 351.7 L742.4 350.9Z" fill="#5c85ad" stroke="#5c85ad"/>
<path d="M739.4 341.2 L745.3 339.0 L754.3 342.7 L751.3 346.5 L745.3 345.7 L740.9 344.2Z" fill="#ccc8e3" stroke="#ccc8e3"/>
<path d="M751.3 346.5 L754.3 342.7 L764.8 345.0 L763.3 348.0 L752.8 348.0Z" fill="#474747" stroke="#474747"/>
<path d="M751.3 350.9 L752.8 348.0 L763.3 348.0 L764.8 349.4 L760.3 354.7 L752.1 353.9Z" fill="#cdc8e3" stroke="#cdc8e3"/>
<path d="M743.9 353.9 L748.3 353.2 L749.1 355.4 L745.3 356.2Z" fill="#aec2d7" stroke="#aec2d7"/>
<path d="M745.3 356.2 L749.1 355.4 L752.1 353.9 L757.3 355.4 L755.8 358.4 L751.3 358.4 L749.8 361.4 L753.6 364.4 L748.3 359.9Z" fill="#8fabc7" stroke="#8fabc7"/>
<path d="M749.8 358.4 L756.6 357.7 L755.8 363.7 L753.6 364.4 L750.6 361.4Z" fill="#97b1cb" stroke="#97b1cb"/>
<path d="M755.8 353.9 L760.3 354.7 L765.5 361.4 L764.8 365.2 L761.8 365.9 L758.1 363.7 L756.6 357.7Z" fill="#6a8fb5" stroke="#6a8fb5"/>
<path d="M755.8 363.7 L761.8 365.2 L761.1 367.4 L757.3 365.9Z" fill="#c0d0e0" stroke="#c0d0e0"/>
<path d="M760.3 354.7 L764.8 349.4 L774.5 348.0 L780.5 352.4 L779.8 359.9 L775.3 361.4 L765.5 361.4Z" fill="#c8c3e1" stroke="#c8c3e1"/>
<path d="M774.5 347.2 L779.0 348.0 L782.7 352.4 L779.8 355.4 L778.3 351.7Z" fill="#474747" stroke="#474747"/>
<path d="M765.5 361.4 L775.3 361.4 L779.8 359.9 L779.0 366.6 L774.5 368.9 L766.3 368.1 L764.8 365.2Z" fill="#698eb4" stroke="#698eb4"/>
<path d="M761.1 367.4 L764.8 365.2 L766.3 368.1 L765.5 369.6 L761.8 369.6Z" fill="#474747" stroke="#474747"/>
<path d="M757.3 365.9 L761.1 367.4 L761.8 369.6 L760.3 374.1 L758.1 371.9Z" fill="#9fb7cf" stroke="#9fb7cf"/>
<path d="M760.3 374.1 L761.8 369.6 L765.5 369.6 L774.5 368.9 L776.0 371.9 L770.8 372.6 L772.3 378.6 L769.3 383.9 L764.8 382.4 L761.8 377.9ZM764.8 385.3 L772.3 386.1 L770.8 387.6 L764.8 386.8Z" fill="#ccc7e3" stroke="#ccc7e3"/>
<path d="M776.0 368.9 L779.8 366.6 L784.2 368.1 L779.8 371.9Z" fill="#b4add6" stroke="#b4add6"/>
<path d="M277.2 428.2 L279.8 427.8 L279.5 429.2 L277.4 429.5ZM282.0 429.6 L283.6 430.2 L283.2 430.9 L282.1 430.5ZM284.4 431.2 L287.6 432.3 L287.2 433.1 L284.6 432.2ZM287.2 434.3 L289.5 435.5 L290.0 436.8 L287.8 438.6 L286.8 436.5Z" fill="#5748a3" stroke="#5748a3"/>
<path d="M513.9 423.0 L518.4 423.0 L519.1 424.5 L514.6 425.0Z" fill="#c4d2e1" stroke="#c4d2e1"/>
<path d="M957.4 411.5 L964.8 410.0 L967.8 410.7 L969.3 421.1 L974.5 427.1 L978.2 431.5 L972.3 435.2 L970.8 441.2 L970.0 444.9 L964.8 447.9 L962.6 443.4 L958.9 436.0 L955.9 430.8 L954.5 424.8 L957.4 418.9Z" fill="#beb8db" stroke="#beb8db"/>
<path d="M972.3 435.2 L978.2 431.5 L981.2 434.5 L979.7 441.9 L983.4 440.4 L990.1 441.2 L993.8 451.6 L987.1 453.1 L984.9 456.0 L981.9 457.5 L979.7 454.5 L977.5 456.0 L978.2 462.0 L978.2 467.9 L981.2 471.6 L981.9 475.0 L976.0 475.0 L974.5 467.9 L973.8 460.5 L972.3 451.6 L970.8 444.1Z" fill="#b5afd7" stroke="#b5afd7"/>
<path d="M978.2 431.5 L981.2 427.8 L989.3 424.8 L997.5 430.0 L996.0 432.3 L990.1 434.5 L993.1 441.2 L999.0 447.1 L1004.9 453.1 L1005.7 460.5 L1000.5 466.4 L994.5 470.1 L992.3 464.9 L997.5 462.0 L1000.5 456.0 L994.5 451.6 L990.1 441.2 L983.4 440.4 L979.7 441.9 L981.2 434.5Z" fill="#474747" stroke="#474747"/>
<path d="M984.9 456.0 L987.1 453.1 L993.8 451.6 L999.0 453.1 L999.0 460.5 L994.5 463.5 L990.1 463.5 L986.4 459.0Z" fill="#cbc6e3" stroke="#cbc6e3"/>
<path d="M1099.2 453.2 L1101.5 452.6 L1102.8 454.4 L1101.5 456.2 L1099.5 455.8Z" fill="#c1d1e0" stroke="#c1d1e0"/>
<path d="M779.3 587.7 L783.8 585.5 L786.0 589.2 L782.3 592.5Z" fill="#aec2d7" stroke="#aec2d7"/>
<path d="M789.8 577.2 L793.5 576.9 L794.5 581.0 L790.5 581.7Z" fill="#b8cadc" stroke="#b8cadc"/>
<path d="M487.7 349.0 L498.2 346.0 L504.2 346.7 L499.7 351.2 L493.7 353.5 L489.2 352.0ZM493.7 354.2 L498.9 353.5 L497.4 362.4 L492.2 367.7 L490.7 360.9ZM501.9 352.7 L512.4 355.7 L510.1 364.7 L504.9 362.4 L502.7 358.0ZM501.9 366.9 L514.6 362.4 L521.4 360.9 L513.1 366.9 L504.2 368.4ZM516.9 358.0 L524.4 356.5 L522.1 359.7 L517.6 360.2Z" fill="#ffffff" stroke="#ffffff"/>
<path d="M779.7 364.4 L783.5 354.7 L788.0 352.4 L792.4 354.7 L796.2 353.9 L801.4 352.4 L802.9 355.4 L801.4 357.7 L805.9 359.9 L810.4 362.9 L813.4 366.6 L811.9 369.6 L805.9 368.9 L799.9 367.4 L794.7 366.6 L788.7 368.1 L783.5 368.9 L779.7 367.4ZM794.7 353.9 L802.9 351.7 L801.4 355.4 L795.4 355.4Z" fill="#ffffff" stroke="#ffffff"/>
<path d="M826.1 356.9 L829.8 353.2 L835.1 351.7 L839.6 352.4 L840.3 356.2 L835.8 358.4 L837.3 362.9 L841.8 365.9 L844.8 367.4 L845.5 371.9 L846.3 382.4 L841.1 382.4 L835.1 379.4 L833.6 371.9 L834.3 368.9 L829.1 362.9 L826.1 359.9Z" fill="#ffffff" stroke="#ffffff"/>
<path d="M835.4 403.4 L842.9 409.4 L850.3 413.9 L858.6 413.9 L857.1 419.1 L847.4 421.4 L842.9 419.1 L839.9 413.9Z" fill="#ffffff" stroke="#ffffff"/>
<path d="M794.2 497.2 L799.5 495.7 L800.5 502.4 L795.7 504.7ZM788.0 506.2 L789.5 506.2 L791.5 524.9 L790.1 524.9ZM798.4 530.1 L799.9 530.1 L803.2 545.8 L801.7 546.7Z" fill="#ffffff" stroke="#ffffff"/></g>
<g stroke="#2c2c2c" stroke-width="0.8" stroke-linejoin="round"><path d="M771.9 286.7 L779.8 286.7 L791.0 290.1 L797.7 294.6 L788.7 296.8 L788.7 300.2 L795.5 300.2 L802.2 292.3 L813.4 289.0 L821.9 288.9 L833.9 288.9 L848.8 287.4 L851.8 290.4 L857.8 294.9 L863.8 291.9 L857.8 282.9 L848.8 279.9 L850.3 276.9 L860.8 279.9 L872.7 276.9 L881.7 272.4 L892.2 270.9 L907.2 269.4 L922.1 272.4 L916.1 278.4 L929.6 276.9 L944.5 278.4 L959.5 279.9 L971.5 282.2 L982.4 279.9 L1004.9 281.4 L1028.8 284.4 L1049.8 285.9 L1064.7 287.4 L1087.2 291.9 L1102.1 294.9 L1106.6 299.4 L1094.6 299.4 L1088.6 302.4 L1096.1 305.3 L1085.7 309.8 L1079.7 312.8 L1073.7 312.8 L1072.2 317.3 L1079.7 324.8 L1082.7 336.8 L1079.7 342.7 L1075.2 333.8 L1067.7 321.8 L1064.7 306.8 L1055.7 308.3 L1049.8 314.3 L1028.8 314.3 L1022.8 326.3 L1030.3 330.8 L1042.3 335.3 L1046.8 347.2 L1045.3 360.7 L1034.8 363.7 L1034.8 353.2 L1031.8 347.2 L1030.0 349.9 L1024.5 348.4 L1012.5 339.4 L1002.0 332.7 L991.6 333.5 L988.6 342.4 L979.6 343.9 L961.6 340.9 L943.7 337.2 L931.7 342.4 L919.8 344.7 L898.8 338.0 L886.8 330.5 L870.4 326.7 L853.9 332.0 L850.9 339.4 L830.0 338.0 L823.3 341.1 L822.4 348.7 L826.1 354.7 L826.1 359.9 L829.8 362.9 L832.8 371.1 L828.3 368.9 L822.4 365.2 L813.4 363.7 L810.4 362.9 L805.9 359.9 L801.4 357.7 L802.9 355.4 L805.2 349.4 L807.4 344.2 L802.9 341.2 L792.4 336.0 L786.5 333.0 L783.1 328.2 L779.8 324.9 L774.7 322.6 L775.3 313.7 L779.8 305.8 L777.5 294.6ZM815.9 281.4 L818.9 273.9 L829.4 270.2 L841.3 268.7 L836.8 270.9 L824.9 275.4 L820.4 282.9ZM793.5 260.5 L809.9 258.2 L827.9 259.7 L817.4 262.0 L802.4 262.0ZM872.7 260.5 L884.7 261.2 L893.7 263.5 L899.7 265.7 L884.7 265.0ZM964.5 270.9 L975.0 269.4 L994.4 272.4 L989.9 273.9 L978.0 273.9 L985.4 278.4 L975.0 282.2 L966.0 278.4ZM1040.8 329.3 L1043.8 330.8 L1052.7 342.7 L1058.7 353.2 L1055.7 354.7 L1048.3 345.7Z" fill="#988fc7"/>
<path d="M823.4 341.2 L829.4 338.3 L842.8 339.8 L853.3 336.8 L851.8 330.8 L869.8 326.3 L887.7 330.0 L899.7 338.3 L917.6 344.2 L916.8 349.9 L910.8 352.9 L907.8 358.9 L910.8 364.9 L901.8 363.4 L889.8 369.4 L882.4 369.4 L868.9 360.4 L859.9 354.4 L856.8 354.7 L847.0 356.9 L849.3 367.4 L841.8 365.9 L837.3 362.9 L835.8 358.4 L840.3 356.2 L839.6 352.4 L835.1 351.7 L829.8 353.2 L826.1 354.7 L822.4 348.7 L823.3 341.1Z" fill="#cac5e2"/>
<path d="M435.0 286.0 L470.0 286.2 L482.6 289.4 L494.2 291.5 L505.7 290.4 L515.2 293.1 L524.6 291.0 L530.9 288.9 L535.1 292.0 L533.0 295.2 L528.8 298.3 L524.6 299.4 L517.3 301.5 L512.0 305.7 L504.7 313.0 L502.6 317.2 L504.7 321.4 L514.1 325.6 L521.5 327.7 L520.4 334.0 L519.4 338.2 L524.6 337.2 L527.8 329.8 L535.1 325.6 L539.3 319.3 L540.4 313.0 L543.5 308.8 L546.7 304.6 L549.8 300.4 L554.0 299.4 L556.1 305.7 L558.2 313.0 L557.2 318.3 L564.5 315.1 L570.8 312.0 L572.9 318.3 L575.0 325.6 L580.3 329.8 L581.3 334.0 L578.2 342.0 L576.5 339.8 L564.5 345.7 L549.6 345.7 L540.6 351.7 L545.1 351.7 L543.6 356.2 L534.6 354.7 L528.6 354.7 L519.7 359.2 L512.2 363.7 L504.7 366.7 L501.7 362.2 L507.7 353.2 L501.7 347.2 L492.7 347.2 L483.8 345.7 L482.3 344.5 L416.5 344.5 L416.2 345.3 L412.7 338.5 L414.5 329.4 L416.7 323.7 L416.2 314.5 L407.0 312.5ZM473.2 280.5 L483.7 275.2 L496.3 275.2 L501.5 278.4 L506.8 277.3 L512.0 281.5 L518.3 279.4 L522.5 283.6 L516.2 288.9 L504.7 288.9 L493.1 289.9 L483.7 288.9 L480.5 283.6ZM522.6 274.6 L536.3 273.3 L539.0 285.5 L533.5 289.6 L525.3 285.5ZM541.4 281.5 L548.8 276.3 L559.3 275.2 L570.8 277.3 L579.2 283.6 L587.6 292.0 L588.7 295.2 L580.3 298.3 L577.1 296.2 L575.0 304.6 L570.8 308.8 L562.4 304.6 L556.1 299.4 L549.8 299.4 L547.7 294.1 L543.5 289.9 L540.4 284.7ZM530.9 297.3 L538.3 296.2 L543.5 302.5 L535.1 304.6ZM488.9 269.8 L498.5 266.4 L512.1 266.4 L516.2 271.2 L505.3 275.3 L494.4 273.2ZM513.4 265.6 L525.7 263.6 L527.1 267.0 L517.5 268.4ZM531.3 263.3 L542.2 262.6 L544.9 266.0 L536.8 268.0ZM542.9 265.7 L550.4 262.9 L553.1 266.4 L545.6 269.1ZM550.5 260.1 L562.8 258.1 L572.4 259.4 L565.5 265.6 L554.6 265.6ZM558.8 257.9 L572.5 255.9 L586.1 254.5 L599.8 253.8 L612.1 254.1 L608.0 258.6 L593.0 263.4 L579.3 266.8 L565.7 268.8 L560.2 266.1ZM549.0 268.4 L562.7 267.0 L573.6 268.4 L568.2 273.9 L554.5 275.2ZM526.4 270.8 L540.1 268.0 L548.3 269.4 L540.1 274.9 L529.2 276.2ZM567.5 344.2 L576.5 339.8 L582.5 345.7 L581.0 351.7 L573.5 350.2Z" fill="#c3bede"/>
<path d="M435.0 286.0 L424.2 284.3 L410.5 282.6 L401.3 283.7 L394.5 284.8 L387.6 287.1 L380.8 289.4 L379.6 292.3 L383.1 294.5 L378.5 296.8 L371.6 296.8 L365.9 297.4 L364.8 300.3 L371.6 300.8 L363.7 304.2 L355.7 307.1 L353.4 309.4 L353.9 312.8 L347.7 312.2 L346.5 313.9 L355.7 315.1 L353.4 316.8 L357.9 317.9 L347.7 322.5 L332.8 328.2 L316.8 333.4 L324.8 332.2 L338.5 327.6 L347.7 324.8 L361.4 320.2 L370.5 316.8 L378.5 312.8 L385.3 310.0 L389.9 309.4 L396.8 310.5 L404.7 312.8 L407.0 320.2 L410.5 327.1 L414.5 329.4 L416.7 323.7 L416.2 314.5 L407.0 312.5Z" fill="#5748a3"/>
<path d="M412.2 345.2 L483.2 345.2 L487.7 347.5 L493.7 351.2 L502.7 349.7 L505.7 353.5 L511.6 356.5 L507.2 362.4 L501.2 366.9 L508.6 366.9 L514.6 360.9 L523.6 358.0 L529.6 356.5 L538.6 352.0 L544.5 350.5 L545.3 355.0 L538.6 360.9 L532.6 366.9 L523.6 371.4 L517.6 374.4 L511.6 383.4 L505.7 389.4 L498.2 395.3 L493.7 399.8 L495.2 414.8 L492.2 418.5 L487.7 410.3 L484.7 404.3 L475.7 404.3 L468.3 405.8 L457.8 404.3 L451.8 408.8 L448.8 416.3 L444.3 414.8 L439.8 405.8 L433.9 402.8 L427.9 399.1 L420.4 399.8 L409.9 397.6 L402.4 396.1 L396.5 390.9 L395.0 377.4 L398.0 365.4 L403.9 356.5 L409.9 349.0Z" fill="#5748a3"/>
<path d="M402.4 396.1 L427.9 399.1 L433.9 402.8 L439.8 405.8 L444.3 414.8 L448.8 416.3 L445.8 425.3 L448.1 434.2 L453.3 439.5 L460.8 438.0 L465.3 431.2 L473.5 430.5 L471.2 437.2 L466.8 443.2 L460.8 443.2 L460.8 447.7 L454.8 447.7 L445.8 447.7 L435.3 444.0 L424.9 437.2 L422.6 431.2 L420.4 425.3 L415.9 417.8 L412.2 408.8 L409.9 399.8 L408.4 399.8 L409.9 408.8 L412.9 417.8 L415.2 425.3 L412.2 425.3 L408.4 417.8 L405.4 408.8 L402.4 401.3Z" fill="#a49ccd"/>
<path d="M456.3 447.7 L460.8 447.7 L461.5 443.2 L466.8 443.2 L466.0 447.7 L463.8 451.4 L457.8 452.2Z" fill="#cbc6e3"/>
<path d="M466.0 441.7 L468.3 441.7 L467.5 447.7 L466.0 447.7Z" fill="#c4d3e2"/>
<path d="M463.8 451.4 L468.3 447.7 L480.2 449.9 L477.2 454.4 L469.8 455.9Z" fill="#668cb3"/>
<path d="M457.8 452.2 L463.8 451.4 L469.8 455.9 L463.8 455.2Z" fill="#789abc"/>
<path d="M469.8 455.9 L477.2 454.4 L478.7 462.7 L475.7 465.7Z" fill="#7d9ebe"/>
<path d="M475.7 465.7 L478.7 462.7 L481.7 468.6 L478.7 470.1Z" fill="#8ca8c5"/>
<path d="M479.5 426.8 L484.7 425.3 L493.7 426.8 L499.7 429.8 L507.2 434.2 L499.7 435.0 L493.7 431.2 L484.7 429.0Z" fill="#ccc7e3"/>
<path d="M506.4 439.5 L510.1 435.7 L516.1 435.7 L522.1 438.7 L519.1 441.0 L511.6 440.2Z" fill="#4976a4"/>
<path d="M495.9 440.2 L501.2 441.0 L498.2 442.0Z" fill="#a5bcd2"/>
<path d="M604.1 260.5 L617.7 257.8 L637.6 255.7 L653.3 254.7 L669.0 255.2 L684.7 257.3 L698.3 258.4 L684.7 259.9 L682.6 264.7 L684.7 270.9 L678.4 275.1 L672.2 281.4 L670.1 285.6 L659.6 288.7 L649.1 290.3 L638.6 295.0 L630.3 298.2 L624.0 304.4 L616.7 313.3 L610.4 310.7 L605.1 302.4 L603.0 296.1 L605.9 289.8 L610.9 284.9 L611.9 279.3 L607.9 273.0 L603.9 270.9 L590.5 268.8 L588.4 265.7 L592.6 264.7 L603.0 263.6Z" fill="#c7d5e3" stroke="#5c6068" stroke-width="1.7"/>
<path d="M662.8 297.9 L670.8 294.9 L682.8 295.9 L685.8 298.9 L678.8 302.9 L668.8 302.9Z" fill="#c4d3e1"/>
<path d="M734.7 263.0 L742.7 261.0 L752.7 260.0 L764.7 262.0 L758.7 265.0 L750.7 268.0 L744.7 269.0Z" fill="#89a6c4"/>
<path d="M472.4 462.7 L479.9 468.0 L485.9 472.4 L491.9 468.0 L495.6 472.4 L494.1 474.7 L485.9 473.9 L479.9 470.9 L473.9 466.5Z" fill="#9bb4cd"/>
<path d="M495.6 472.4 L499.4 463.5 L509.8 459.7 L512.8 462.0 L508.3 466.5 L506.8 470.9 L514.3 478.4 L520.3 481.4 L521.8 490.4 L515.8 491.9 L515.1 497.9 L515.8 508.3 L511.3 509.8 L506.8 505.3 L501.6 497.9 L494.9 494.9 L490.4 491.9 L493.4 484.4 L494.9 476.9Z" fill="#beb8dc"/>
<path d="M508.3 466.5 L512.8 459.0 L517.3 461.2 L521.8 463.5 L532.3 462.7 L539.8 469.4 L542.7 472.4 L539.8 479.9 L542.7 484.4 L538.3 484.4 L532.3 490.4 L526.3 494.9 L523.3 491.9 L521.8 482.9 L514.3 478.4 L506.8 470.9Z" fill="#474747"/>
<path d="M539.8 472.4 L545.7 473.9 L550.2 478.4 L548.7 482.9 L551.7 488.9 L545.7 491.9 L542.7 484.4 L539.8 479.9Z" fill="#becedf"/>
<path d="M548.7 478.4 L558.5 478.4 L557.7 488.9 L551.7 488.9 L548.7 482.9Z" fill="#c1d1e0"/>
<path d="M558.5 479.2 L563.7 481.4 L565.9 485.9 L562.2 490.4 L557.7 488.9Z" fill="#474747"/>
<path d="M490.4 491.9 L494.9 494.9 L501.6 497.9 L499.4 502.4 L493.4 508.3 L488.9 511.3 L485.9 508.3 L485.2 497.9Z" fill="#cbc6e2"/>
<path d="M485.2 509.8 L488.9 511.3 L493.4 508.3 L499.4 502.4 L501.6 497.9 L506.8 505.3 L511.3 509.8 L515.8 508.3 L506.8 512.8 L505.3 518.8 L509.8 526.3 L515.8 530.8 L518.8 536.8 L520.3 551.7 L515.8 553.2 L508.3 545.7 L500.9 538.3 L494.9 527.8 L488.9 518.8 L484.4 514.3Z" fill="#c5c0df"/>
<path d="M515.8 491.9 L521.8 490.4 L526.3 494.9 L532.3 490.4 L538.3 484.4 L542.7 484.4 L545.7 491.9 L551.7 488.9 L557.7 488.9 L562.2 490.4 L566.7 485.9 L569.7 493.4 L566.7 499.4 L574.2 497.9 L584.6 502.4 L593.6 506.8 L602.6 508.3 L610.1 512.8 L611.6 521.8 L604.1 533.8 L599.6 539.8 L601.1 554.7 L595.1 566.7 L581.6 572.7 L586.1 570.0 L578.6 579.0 L577.2 590.9 L569.7 598.4 L563.7 592.4 L557.7 590.9 L563.7 579.0 L553.2 574.5 L560.7 569.7 L551.7 557.7 L550.2 551.7 L542.7 538.3 L529.3 527.8 L518.8 530.8 L515.8 530.8 L509.8 526.3 L505.3 518.8 L506.8 512.8 L515.8 508.3 L515.1 497.9Z" fill="#8478bc"/>
<path d="M518.8 530.8 L529.3 527.8 L542.7 538.3 L550.2 551.7 L551.7 557.7 L539.8 560.7 L533.8 566.7 L526.3 568.2 L521.8 557.7 L520.3 551.7 L518.8 536.8Z" fill="#474747"/>
<path d="M539.8 560.7 L551.7 557.7 L560.7 569.7 L562.2 579.0 L553.2 582.0 L553.2 574.5 L544.2 570.0 L547.2 569.7Z" fill="#7497ba"/>
<path d="M520.3 551.7 L521.8 557.7 L526.3 568.2 L524.8 585.0 L523.3 599.9 L527.8 614.9 L529.3 626.8 L535.3 637.3 L536.8 652.3 L541.2 656.8 L553.2 661.2 L563.7 665.7 L557.7 669.5 L545.7 665.7 L535.3 658.3 L529.3 647.8 L524.8 635.8 L523.3 626.8 L520.3 613.4 L518.8 596.9 L518.8 579.0 L515.8 553.2Z" fill="#cac5e2"/>
<path d="M526.3 568.2 L533.8 566.7 L539.8 560.7 L547.2 569.7 L544.2 570.0 L553.2 574.5 L553.2 582.0 L563.7 579.0 L557.7 590.9 L556.2 599.9 L560.7 605.2 L563.7 611.9 L560.7 617.1 L551.7 617.9 L551.7 623.9 L546.5 624.6 L548.7 629.8 L548.7 634.3 L545.7 640.3 L551.7 644.8 L549.5 650.8 L547.2 656.8 L541.2 656.8 L536.8 652.3 L535.3 637.3 L529.3 626.8 L527.8 614.9 L523.3 599.9 L524.8 585.0Z" fill="#c1bbdd"/>
<path d="M557.7 590.9 L563.7 592.4 L569.7 598.4 L568.2 605.2 L560.7 605.2 L556.2 599.9Z" fill="#9cb5ce"/>
<path d="M723.7 306.9 L732.6 302.4 L739.4 296.8 L746.1 290.1 L752.8 286.2 L761.8 283.9 L774.1 284.5 L773.0 287.9 L764.0 286.7 L761.8 289.0 L752.8 291.2 L746.1 294.6 L739.4 302.4 L738.2 311.4 L737.1 317.0 L732.6 318.1 L727.0 317.0 L723.7 312.5Z" fill="#89a6c4"/>
<path d="M739.4 302.4 L746.1 294.6 L752.8 291.2 L761.8 289.0 L762.9 296.8 L757.3 299.1 L752.8 305.8 L752.8 315.9 L748.3 320.4 L743.9 324.9 L740.5 324.9 L738.2 319.3 L737.1 312.5Z" fill="#4f7ba7"/>
<path d="M762.9 286.7 L771.9 286.7 L777.5 294.6 L779.8 305.8 L775.3 310.3 L768.5 312.5 L760.7 312.5 L758.4 304.7 L765.2 299.1 L762.9 294.6Z" fill="#83a2c1"/>
<path d="M760.7 313.7 L770.8 312.5 L775.3 313.7 L773.0 318.1 L762.9 318.1Z" fill="#b7c9db"/>
<path d="M760.7 319.3 L773.0 318.1 L774.7 322.6 L768.5 323.8 L760.7 323.2Z" fill="#acc0d5"/>
<path d="M760.7 323.2 L768.5 323.8 L774.7 322.6 L771.9 328.2 L767.4 329.4 L761.8 327.1Z" fill="#9eb6ce"/>
<path d="M767.4 329.4 L771.9 328.2 L774.7 322.6 L779.8 324.9 L783.1 328.2 L786.5 332.7 L783.1 337.2 L777.5 336.1 L767.4 336.1Z" fill="#4e7aa6"/>
<path d="M745.0 330.5 L757.3 328.2 L761.8 327.1 L767.4 329.4 L767.4 336.1 L766.3 341.7 L761.8 344.0 L752.8 342.8 L747.2 339.5Z" fill="#c1bcdd"/>
<path d="M731.5 321.5 L737.1 320.4 L739.4 324.9 L737.1 328.2 L731.5 327.1Z" fill="#81a1c0"/>
<path d="M696.7 320.4 L701.2 317.0 L706.8 317.6 L705.7 322.6 L709.1 325.4 L711.9 330.5 L714.9 334.1 L713.6 339.5 L706.8 341.1 L699.0 341.9 L703.5 336.7 L704.6 332.7 L701.8 329.4 L699.5 325.4 L697.3 324.3Z" fill="#b8b2d8"/>
<path d="M690.0 329.4 L694.5 327.1 L697.9 329.4 L696.7 335.0 L690.0 337.2Z" fill="#8eaac7"/>
<path d="M766.3 341.7 L767.4 336.1 L777.5 336.1 L783.1 337.2 L786.5 332.7 L791.0 336.1 L804.4 342.8 L806.7 348.4 L801.1 352.9 L795.5 354.0 L788.7 354.0 L784.2 356.3 L779.8 351.8 L775.3 347.3 L766.3 347.3 L764.0 345.1Z" fill="#beb8dc"/>
<path d="M679.9 407.9 L685.9 398.9 L694.9 386.9 L699.4 382.4 L703.9 385.4 L705.3 395.9 L693.4 400.4 L685.9 406.4 L684.4 411.6Z" fill="#c4bedf"/>
<path d="M662.0 431.1 L665.0 421.3 L672.4 411.6 L685.2 411.6 L685.2 415.3 L673.9 417.6 L672.4 430.3Z" fill="#474747"/>
<path d="M662.0 431.1 L672.4 430.3 L673.9 417.6 L685.2 415.3 L690.4 413.9 L692.6 418.3 L691.1 449.8 L675.4 449.8 L670.9 446.0 L663.5 445.3 L663.5 434.8Z" fill="#9bb4cd"/>
<path d="M685.9 406.4 L693.4 400.4 L705.3 395.9 L703.9 385.4 L712.8 382.4 L729.3 382.4 L727.8 391.4 L733.8 398.9 L733.8 416.8 L739.8 424.3 L718.8 437.0 L712.8 434.8 L693.4 419.8 L690.4 413.9Z" fill="#c3bdde"/>
<path d="M729.3 382.4 L736.8 382.4 L736.8 389.9 L733.8 398.9 L727.8 391.4Z" fill="#ccc8e3"/>
<path d="M733.8 398.9 L736.8 394.4 L747.2 395.9 L757.7 400.4 L763.7 395.9 L774.2 398.9 L774.2 434.8 L748.7 427.3 L739.8 424.3 L733.8 416.8Z" fill="#474747"/>
<path d="M774.2 398.9 L787.6 400.4 L798.1 400.4 L793.6 404.9 L802.6 422.8 L798.1 428.8 L774.2 428.8Z" fill="#474747"/>
<path d="M675.4 449.8 L691.1 449.8 L692.6 418.3 L712.8 434.8 L718.8 437.0 L718.8 449.8 L708.3 451.2 L700.9 455.7 L694.9 461.7 L688.9 458.7 L679.9 457.2Z" fill="#cbc6e2"/>
<path d="M718.8 437.0 L739.8 424.3 L748.7 427.3 L748.7 443.8 L744.2 455.7 L732.3 454.2 L717.3 458.7 L708.3 451.2 L718.8 449.8Z" fill="#cac6e2"/>
<path d="M748.7 427.3 L774.2 434.8 L772.7 449.8 L768.2 452.7 L771.2 463.2 L763.7 464.7 L747.2 473.7 L747.2 464.7 L744.2 455.7 L748.7 443.8Z" fill="#ccc7e3"/>
<path d="M774.2 428.8 L798.1 428.8 L805.6 437.8 L810.1 443.8 L805.6 454.2 L798.1 470.7 L784.6 479.7 L769.7 473.7 L768.2 452.7 L772.7 449.8 L774.2 434.8Z" fill="#c0badc"/>
<path d="M715.8 458.7 L732.3 454.2 L744.2 455.7 L747.2 464.7 L741.2 470.7 L733.8 478.2 L724.8 482.7 L717.3 476.7 L714.3 467.7Z" fill="#9288c4"/>
<path d="M747.2 476.7 L763.7 464.7 L771.2 463.2 L777.2 476.7 L780.1 479.7 L759.2 482.7 L751.7 485.7Z" fill="#8fabc7"/>
<path d="M733.8 478.2 L741.2 470.7 L747.2 464.7 L747.2 476.7 L751.7 485.7 L742.7 491.0 L730.8 491.0Z" fill="#c9c4e1"/>
<path d="M732.9 490.5 L744.9 489.0 L746.4 496.5 L743.4 502.4 L740.4 508.4 L731.4 499.4Z" fill="#b5c7da"/>
<path d="M738.9 508.4 L743.4 502.4 L746.4 496.5 L744.9 489.0 L756.8 486.0 L758.3 498.0 L752.4 506.9 L744.9 514.4 L740.4 515.9Z" fill="#474747"/>
<path d="M756.8 486.0 L759.8 481.5 L789.8 484.5 L792.7 492.0 L788.3 502.4 L786.8 518.9 L792.7 524.9 L786.8 524.9 L788.3 538.3 L780.8 533.9 L767.3 530.9 L765.8 518.9 L753.9 520.4 L749.4 515.9 L740.4 515.9 L744.9 514.4 L752.4 506.9 L758.3 498.0Z" fill="#474747"/>
<path d="M789.8 486.0 L801.7 484.5 L804.7 496.5 L797.2 502.4 L789.8 500.9Z" fill="#c3bedf"/>
<path d="M801.7 484.5 L819.7 483.0 L821.2 500.9 L815.2 509.9 L798.7 500.9 L804.7 496.5Z" fill="#c1bbdd"/>
<path d="M789.8 500.9 L797.2 502.4 L815.2 509.9 L816.7 530.9 L804.7 533.9 L797.2 529.4 L792.7 524.9 L786.8 518.9 L788.3 502.4Z" fill="#474747"/>
<path d="M788.3 502.4 L791.2 501.7 L789.8 509.9 L787.5 508.4Z" fill="#547faa"/>
<path d="M740.4 515.9 L749.4 515.9 L753.9 520.4 L765.8 518.9 L767.3 530.9 L767.3 545.8 L774.8 551.8 L759.8 550.3 L740.4 550.3 L741.9 536.8 L743.4 524.9Z" fill="#c9c4e2"/>
<path d="M767.3 530.9 L780.8 533.9 L788.3 538.3 L786.8 524.9 L792.7 524.9 L797.2 529.4 L797.2 539.8 L789.8 542.8 L777.8 553.3 L768.8 550.3 L767.3 545.8Z" fill="#cbc7e3"/>
<path d="M796.5 527.9 L800.5 528.2 L804.7 533.9 L805.0 548.1 L802.5 550.3 L798.0 542.8Z" fill="#cbc6e2"/>
<path d="M804.7 533.9 L816.7 530.9 L818.2 542.8 L804.7 553.3 L801.7 563.8 L803.2 572.7 L794.2 575.7 L791.2 566.8 L795.7 560.8 L792.7 545.8 L803.2 548.8Z" fill="#c7c2e1"/>
<path d="M777.8 553.3 L789.8 542.8 L795.7 545.8 L795.7 560.8 L791.2 566.8 L780.8 563.8Z" fill="#cbc7e3"/>
<path d="M740.4 550.3 L759.8 550.3 L764.3 552.6 L762.8 578.7 L759.8 586.2 L752.4 584.7 L744.9 563.8Z" fill="#acc0d5"/>
<path d="M764.3 552.6 L774.8 551.8 L780.8 563.8 L791.2 566.8 L780.8 572.7 L762.8 580.2Z" fill="#aec2d7"/>
<path d="M752.4 584.7 L759.8 586.2 L762.8 580.2 L780.8 572.7 L791.2 566.8 L794.2 575.7 L792.7 584.7 L786.8 593.7 L774.8 601.2 L759.8 604.2 L755.3 598.2Z" fill="#bdb7db"/>
<path d="M824.2 565.3 L827.2 548.8 L833.1 544.3 L840.6 535.3 L843.6 545.8 L837.6 563.8 L831.6 574.2 L825.7 575.7Z" fill="#c8c3e1"/>
<path d="M919.8 345.4 L931.7 341.7 L943.7 337.2 L951.2 339.4 L961.6 340.9 L979.6 343.9 L988.6 342.4 L1000.5 351.4 L988.6 354.4 L985.6 361.9 L973.6 366.4 L961.6 363.4 L949.7 361.9 L934.7 354.4 L925.7 351.4Z" fill="#a5bcd2"/>
<path d="M883.9 369.4 L889.8 364.9 L898.8 363.4 L909.3 364.9 L898.8 373.9 L886.8 372.4Z" fill="#474747"/>
<path d="M880.9 375.3 L889.8 373.9 L898.8 373.9 L900.3 379.8 L892.8 381.3 L883.9 379.8Z" fill="#6d91b6"/>
<path d="M910.8 352.9 L919.8 345.4 L925.7 351.4 L934.7 354.4 L949.7 361.9 L961.6 363.4 L973.6 366.4 L985.6 361.9 L988.6 354.4 L1000.5 351.4 L988.6 342.4 L991.6 333.5 L1002.0 332.7 L1004.9 333.8 L1019.8 341.2 L1031.8 347.2 L1036.3 354.7 L1034.8 363.7 L1034.8 363.0 L1024.3 372.0 L1013.9 372.0 L1009.4 376.5 L1019.8 382.4 L1016.8 388.4 L1025.8 397.4 L1030.3 404.9 L1027.3 419.8 L1016.8 425.8 L1004.9 430.3 L994.4 425.8 L986.9 425.8 L979.4 428.8 L974.5 427.1 L969.3 421.1 L968.6 410.0 L960.0 406.4 L967.6 409.8 L961.6 406.8 L952.7 408.3 L943.7 411.2 L934.7 405.3 L922.7 403.8 L915.3 397.8 L907.8 387.3 L900.3 379.8 L898.8 373.9 L909.3 364.9 L907.8 358.9ZM1001.9 436.3 L1004.9 433.3 L1006.4 439.3 L1003.4 440.8Z" fill="#9448a3"/>
<path d="M1024.3 372.0 L1034.8 363.0 L1036.3 370.5 L1031.8 376.5 L1037.8 379.4 L1042.3 386.9 L1037.8 389.9 L1033.3 385.4 L1028.8 378.0Z" fill="#474747"/>
<path d="M1045.3 394.4 L1052.7 388.4 L1061.7 385.4 L1064.7 376.5 L1063.2 369.0 L1067.7 370.5 L1070.7 378.0 L1072.2 386.9 L1061.7 391.4 L1051.2 395.9 L1049.8 400.4ZM1058.7 363.0 L1064.7 360.0 L1072.2 361.5 L1067.7 366.0 L1061.7 366.0Z" fill="#9e96ca"/>
<path d="M1030.3 419.8 L1033.3 418.3 L1033.3 427.3 L1031.1 428.8Z" fill="#474747"/>
<path d="M1033.3 440.8 L1036.3 437.8 L1039.3 443.8 L1037.8 455.7 L1045.3 455.7 L1049.8 461.7 L1052.7 473.7 L1049.8 479.7 L1043.8 472.2 L1040.8 464.7 L1034.8 455.7Z" fill="#aca4d2"/>
<path d="M1093.1 505.4 L1102.1 508.4 L1109.6 514.4 L1117.1 512.9 L1126.0 508.4 L1121.6 512.9 L1111.1 517.4 L1115.6 524.9 L1118.6 529.4 L1108.1 524.9 L1094.6 524.9Z" fill="#6f93b7"/>
<path d="M1009.4 566.8 L1012.4 563.8 L1024.3 557.8 L1034.8 553.3 L1040.8 545.8 L1046.8 541.3 L1052.7 539.8 L1058.7 533.9 L1064.7 530.9 L1073.7 532.4 L1079.7 536.8 L1076.7 542.8 L1087.2 551.8 L1091.6 545.8 L1094.6 529.4 L1100.6 539.8 L1103.6 551.8 L1109.6 562.3 L1115.6 572.7 L1117.1 584.7 L1112.6 595.2 L1108.1 599.7 L1108.2 595.9 L1100.7 609.4 L1079.8 613.9 L1069.3 609.4 L1058.8 598.9 L1049.8 595.2 L1039.4 595.9 L1028.9 598.9 L1019.9 603.4 L1010.9 605.6 L1006.5 601.9 L1008.0 589.9 L1009.4 575.0 L1012.4 564.5Z" fill="#bfb8db" stroke="#787878" stroke-width="3.2"/>
<path d="M1069.3 616.8 L1087.2 619.8 L1079.8 630.3 L1070.8 633.3Z" fill="#bfb8db" stroke="#787878" stroke-width="3.2"/>
<path d="M1116.4 641.5 L1124.6 634.8 L1138.1 625.8 L1144.1 622.1 L1150.8 617.6 L1157.5 615.3 L1165.0 613.9 L1163.5 617.6 L1156.0 622.8 L1148.6 626.6 L1141.1 632.6 L1129.1 640.0 L1120.1 643.8Z" fill="#8fabc7"/>
<path d="M470.5 748.0 L451.3 740.8 L496.8 742.0 L472.9 739.6 L456.1 734.8 L470.5 732.4 L448.9 730.1 L432.2 728.9 L446.5 722.9 L472.9 719.3 L496.8 718.1 L516.0 716.9 L520.7 713.3 L532.7 714.5 L556.6 716.9 L568.6 713.3 L566.2 707.3 L575.8 701.3 L580.6 691.8 L592.5 689.4 L587.8 701.3 L597.3 710.9 L602.1 718.1 L592.5 725.3 L580.6 727.7 L573.4 728.9 L592.5 731.2 L606.9 733.6 L623.7 737.7 L640.4 733.6 L664.3 731.2 L654.8 727.7 L676.3 721.7 L688.3 713.3 L712.2 709.7 L759.1 708.5 L780.7 704.9 L795.1 703.7 L821.4 697.7 L831.0 698.9 L854.9 702.5 L845.3 713.3 L854.9 709.7 L874.0 702.5 L895.6 698.9 L919.5 697.7 L943.4 697.7 L967.4 698.9 L991.3 696.5 L1015.3 701.3 L1045.2 712.1 L1015.3 722.9 L991.3 730.1 L986.5 734.8 L998.5 739.6 L1018.8 740.8 L998.5 748.0Z" fill="#474747" stroke="none"/>
<path d="M900.8 389.9 L909.8 386.9 L915.7 394.4 L912.7 398.9 L921.7 403.4 L936.7 410.9 L945.7 415.3 L947.2 419.8 L944.2 428.8 L936.7 431.8 L930.7 440.8 L924.7 449.8 L923.2 464.7 L918.7 471.4 L914.2 464.7 L906.8 449.8 L902.3 434.8 L897.8 430.3 L891.8 425.8 L894.8 421.3 L899.3 416.8 L893.3 410.9 L900.8 403.4 L903.8 395.9ZM950.1 409.4 L963.6 406.4 L966.6 412.4 L957.6 419.8 L954.6 425.8 L950.1 416.8Z" fill="#dfc8e3"/>
<path d="M920.2 403.4 L939.7 410.9 L941.2 413.9 L923.2 407.9Z" fill="#c5bfdf"/>
<path d="M944.2 415.3 L950.1 416.8 L954.6 425.8 L948.6 428.8 L945.7 422.8Z" fill="#968cc6"/>
<path d="M935.0 483.0 L939.0 484.0 L941.0 490.0 L937.0 493.0 L934.0 489.0Z" fill="#c8c3e1"/>
<path d="M777.5 370.4 L788.7 368.1 L799.9 367.4 L805.9 368.9 L811.9 369.6 L819.4 368.9 L820.9 373.4 L822.4 378.6 L814.9 381.6 L805.9 382.4 L796.2 383.1 L786.5 383.9 L779.0 383.1 L776.0 374.9Z" fill="#b4add6"/>
<path d="M813.4 363.7 L822.4 365.2 L828.3 368.9 L823.9 369.6 L816.4 368.9 L813.4 366.6Z" fill="#8fabc7"/>
<path d="M819.4 369.6 L823.9 369.6 L825.3 373.4 L822.4 374.1Z" fill="#a0b8d0"/>
<path d="M823.9 369.6 L828.3 368.9 L832.8 371.1 L834.3 374.9 L829.8 375.6 L825.3 373.4Z" fill="#537ea9"/>
<path d="M841.8 365.9 L846.3 368.9 L852.3 365.2 L859.8 368.9 L870.0 371.9 L874.7 374.9 L882.2 380.9 L874.7 386.8 L865.7 383.9 L856.0 379.4 L846.3 382.4 L845.5 371.9Z" fill="#88a5c3"/>
<path d="M847.0 356.9 L849.3 367.4 L852.3 365.2 L855.5 364.9 L867.4 372.4 L874.9 376.8 L880.9 375.3 L882.4 369.4 L868.9 360.4 L858.4 354.4 L848.0 355.9Z" fill="#c5c0e0"/>
<path d="M821.2 375.0 L833.9 381.0 L847.4 381.7 L853.3 378.7 L865.3 383.2 L866.8 390.0 L869.8 399.7 L869.8 404.9 L875.0 412.4 L872.8 418.4 L860.8 416.9 L858.6 413.9 L850.3 413.9 L842.9 409.4 L838.4 403.4 L833.9 400.4 L827.2 393.7 L826.4 387.0 L821.9 379.5Z" fill="#474747"/>
<path d="M801.7 382.5 L815.9 381.0 L821.9 379.5 L826.4 387.0 L827.2 393.7 L833.9 400.4 L832.4 404.9 L826.4 406.4 L811.5 397.4 L810.0 395.9 L815.9 388.5 L815.2 382.5Z" fill="#c4bfdf"/>
<path d="M801.7 383.2 L815.2 382.1 L815.9 388.5 L810.0 395.2 L804.0 395.9 L801.7 390.0Z" fill="#c9c4e1"/>
<path d="M800.2 397.4 L804.0 395.9 L810.0 395.2 L810.7 397.4 L807.7 402.7 L801.7 406.4 L798.7 401.9Z" fill="#7b9cbd"/>
<path d="M799.5 389.2 L803.2 390.0 L801.7 394.4 L799.5 400.4 L798.0 397.4Z" fill="#668cb3"/>
<path d="M801.0 407.2 L807.7 402.7 L810.7 397.4 L826.4 406.4 L832.4 404.9 L835.4 407.9 L839.9 415.4 L842.9 421.4 L847.4 424.4 L856.3 426.6 L857.1 433.3 L847.4 437.1 L838.4 440.0 L817.4 440.0 L812.2 430.3 L806.2 419.9Z" fill="#c6c1e0"/>
<path d="M842.9 420.6 L847.4 423.6 L856.3 419.9 L857.8 416.9 L857.1 425.9 L848.9 425.9Z" fill="#688db3"/>
<path d="M856.3 426.6 L858.6 419.9 L862.3 423.6 L868.3 427.4 L865.3 434.8 L860.1 440.0 L848.9 440.0 L857.1 433.3Z" fill="#a4bbd1"/>
<path d="M866.8 384.7 L877.3 379.5 L888.5 379.5 L893.0 384.7 L891.5 393.7 L884.8 399.7 L881.8 404.9 L869.8 404.9 L869.8 399.7 L866.8 390.0Z" fill="#c3bede"/>
<path d="M869.8 404.9 L881.8 404.9 L884.8 399.7 L891.5 393.7 L895.0 390.0 L899.7 386.2 L904.9 384.0 L908.7 388.5 L903.5 394.4 L905.7 398.9 L902.0 406.4 L901.2 413.9 L902.7 419.9 L895.0 422.9 L888.5 419.9 L882.5 418.4 L872.8 418.4 L875.0 412.4Z" fill="#8c82c0"/>
<path d="M975.7 467.5 L979.4 468.2 L982.4 475.0 L986.2 478.0 L989.9 481.7 L992.2 489.9 L993.7 493.7 L989.9 492.2 L985.4 486.9 L982.4 480.2 L980.2 475.7 L975.7 470.5ZM1006.4 491.4 L1012.4 488.4 L1019.8 483.9 L1025.1 478.0 L1027.3 475.0 L1033.3 480.2 L1030.3 484.7 L1027.3 483.9 L1023.6 486.9 L1019.8 492.9 L1012.4 493.7Z" fill="#c5c0e0"/>
<path d="M967.5 478.7 L975.0 481.7 L979.4 486.2 L986.2 491.4 L991.4 495.2 L995.2 501.9 L997.4 507.9 L996.6 514.6 L992.9 514.6 L988.4 509.4 L983.9 502.6 L980.2 495.9 L975.0 488.4 L971.2 483.9ZM1006.4 491.4 L1012.4 493.7 L1019.8 492.9 L1023.6 486.9 L1027.3 483.9 L1030.3 485.4 L1031.8 494.4 L1028.8 498.9 L1025.8 504.9 L1024.3 509.4 L1019.8 509.4 L1015.3 507.1 L1009.4 505.6 L1007.1 499.6ZM1034.8 494.4 L1039.3 492.9 L1050.5 492.2 L1046.0 495.9 L1037.8 495.9 L1037.8 501.9 L1045.3 499.6 L1043.0 504.9 L1040.8 507.9 L1044.5 512.4 L1041.5 513.9 L1039.3 509.4 L1037.0 504.9 L1035.5 515.3 L1033.3 506.4ZM994.4 516.8 L1000.4 516.1 L1010.9 517.6 L1019.8 520.6 L1031.1 522.8 L1042.3 523.6 L1060.0 522.1 L1060.0 525.0 L1042.3 525.0 L1027.3 525.0 L1016.1 523.6 L1004.9 521.3 L996.6 519.1Z" fill="#7265b2"/>
<path d="M1067.7 499.4 L1076.7 500.9 L1085.7 502.4 L1093.1 505.4 L1093.1 524.9 L1084.2 523.4 L1078.2 512.9 L1070.7 506.9ZM1049.8 523.4 L1064.7 523.4 L1067.7 520.4 L1063.2 524.9 L1049.8 525.6ZM1031.8 526.4 L1043.8 527.9 L1046.8 524.9 L1042.3 530.9ZM1055.7 493.5 L1060.2 490.5 L1061.7 499.4 L1057.2 500.9ZM1070.7 514.4 L1075.2 515.9 L1073.7 517.4Z" fill="#7265b2"/>
<path d="M807.3 445.5 L811.4 441.4 L814.9 448.9 L819.7 453.0 L824.5 457.1 L822.4 459.2 L817.6 455.1 L812.1 452.3 L806.6 452.3Z" fill="#85a4c2"/>
<path d="M821.7 459.9 L824.5 458.5 L825.1 461.2 L822.4 462.6Z" fill="#bccdde"/>
<path d="M806.6 452.3 L812.1 452.3 L817.6 455.1 L822.4 459.2 L822.4 462.6 L825.8 466.0 L837.5 472.9 L830.6 481.1 L821.0 484.5 L815.5 486.6 L806.0 482.5 L800.5 474.2 L797.7 471.5 L801.2 464.0 L805.3 457.1Z" fill="#b0a9d4"/>
<path d="M823.8 462.6 L829.2 464.0 L836.1 461.9 L846.4 459.9 L845.7 468.8 L839.5 479.7 L830.6 490.7 L822.4 500.0 L819.7 500.0 L820.3 486.6 L830.6 481.1 L837.5 472.9 L825.8 466.0Z" fill="#507ca8"/>
<path d="M823.8 442.7 L836.1 442.7 L849.8 440.0 L849.1 446.8 L837.5 454.4 L827.2 457.1 L823.8 453.7Z" fill="#474747"/>
<path d="M662.2 445.6 L668.4 445.1 L674.0 450.3 L675.0 456.9 L670.4 457.5 L662.2 456.9 L660.1 451.3Z" fill="#ccc7e3"/>
<path d="M661.7 458.5 L669.4 458.0 L666.8 461.6 L662.2 461.6Z" fill="#b5c7da"/>
<path d="M666.8 461.6 L669.4 458.0 L676.6 459.5 L682.7 458.5 L684.8 464.7 L686.3 470.8 L683.8 473.9 L679.1 470.8 L675.5 465.7 L671.4 466.2 L668.4 464.7Z" fill="#4976a4"/>
<path d="M670.4 468.2 L671.9 466.2 L676.6 466.2 L678.6 470.8 L675.5 474.9 L671.4 472.9Z" fill="#7d9ebe"/>
<path d="M675.5 474.9 L678.6 470.8 L682.7 472.9 L685.8 477.0 L686.3 483.1 L680.7 480.1Z" fill="#95afca"/>
<path d="M684.8 464.7 L691.0 464.1 L698.7 466.7 L700.2 470.8 L699.2 481.1 L686.8 483.1 L686.3 477.0 L683.8 473.9 L686.3 470.8Z" fill="#c9c4e1"/>
<path d="M692.5 463.1 L696.1 454.4 L706.4 449.8 L711.5 454.4 L713.6 461.6 L698.7 462.1 L698.7 466.7 L691.0 464.1Z" fill="#cac5e2"/>
<path d="M698.7 462.1 L707.9 462.1 L709.4 477.0 L700.2 481.1 L699.2 470.8Z" fill="#c7c2e0"/>
<path d="M707.9 462.1 L710.5 462.6 L711.5 477.0 L709.4 477.0Z" fill="#7b9cbd"/>
<path d="M710.5 462.6 L715.0 459.5 L716.6 461.6 L716.1 477.0 L711.5 477.0Z" fill="#5781ab"/>
<path d="M699.0 347.2 L705.0 345.0 L707.2 341.2 L714.7 339.7 L716.9 339.0 L723.7 341.2 L728.9 345.7 L728.1 349.4 L725.2 352.4 L725.9 356.2 L727.4 359.9 L722.9 362.9 L716.9 365.2 L708.7 362.9 L705.0 362.2 L707.2 356.2 L705.0 350.9Z" fill="#b7b0d8"/>
<path d="M690.0 362.2 L705.0 362.2 L708.7 362.9 L716.9 365.2 L712.4 370.4 L708.7 376.4 L705.0 382.4 L697.5 385.3 L694.5 385.3 L692.2 382.4 L690.0 381.6 L682.5 382.4 L681.0 374.9 L684.0 363.7Z" fill="#beb8dc"/>
<path d="M684.0 365.2 L690.0 365.2 L693.0 365.9 L692.2 374.9 L690.0 376.4 L683.3 377.9 L682.5 371.9Z" fill="#ccc8e3"/>
<path d="M716.9 339.0 L721.4 336.7 L724.4 339.7 L725.2 344.2 L723.7 341.2Z" fill="#ccc8e3"/>
<path d="M718.4 337.5 L722.2 333.7 L725.9 333.0 L726.6 337.5 L724.4 339.7 L721.4 336.7Z" fill="#cac5e2"/>
<path d="M726.6 333.0 L731.9 331.9 L737.9 331.1 L743.9 330.0 L745.3 337.5 L746.1 339.7 L740.9 340.5 L740.1 343.5 L742.4 347.2 L736.4 350.2 L728.9 349.4 L728.9 345.7 L725.2 344.2 L724.4 339.7 L726.6 337.5Z" fill="#b0a9d4"/>
<path d="M725.2 352.4 L728.9 349.4 L736.4 350.2 L734.9 353.9 L728.9 353.9Z" fill="#648bb1"/>
<path d="M727.4 354.7 L734.9 353.9 L736.4 350.2 L743.9 352.4 L742.4 355.4 L741.6 356.9 L746.8 362.2 L753.6 367.4 L755.8 371.9 L752.8 372.6 L750.6 374.9 L749.8 378.6 L746.8 377.9 L748.3 374.1 L743.9 370.4 L738.6 365.9 L733.4 362.2 L728.9 359.2ZM740.9 378.6 L746.8 377.9 L748.3 380.1 L745.3 380.9ZM730.4 364.4 L733.4 363.7 L734.1 374.9 L730.8 375.6Z" fill="#b9b2d9"/>
<path d="M731.5 360.7 L733.4 359.9 L733.4 363.7 L731.9 363.7Z" fill="#b7b0d8"/>
<path d="M736.4 350.2 L742.4 347.2 L745.3 345.7 L752.1 346.5 L751.3 350.9 L745.3 351.7 L742.4 350.9Z" fill="#5c85ad"/>
<path d="M739.4 341.2 L745.3 339.0 L754.3 342.7 L751.3 346.5 L745.3 345.7 L740.9 344.2Z" fill="#ccc8e3"/>
<path d="M751.3 346.5 L754.3 342.7 L764.8 345.0 L763.3 348.0 L752.8 348.0Z" fill="#474747"/>
<path d="M751.3 350.9 L752.8 348.0 L763.3 348.0 L764.8 349.4 L760.3 354.7 L752.1 353.9Z" fill="#cdc8e3"/>
<path d="M743.9 353.9 L748.3 353.2 L749.1 355.4 L745.3 356.2Z" fill="#aec2d7"/>
<path d="M745.3 356.2 L749.1 355.4 L752.1 353.9 L757.3 355.4 L755.8 358.4 L751.3 358.4 L749.8 361.4 L753.6 364.4 L748.3 359.9Z" fill="#8fabc7"/>
<path d="M749.8 358.4 L756.6 357.7 L755.8 363.7 L753.6 364.4 L750.6 361.4Z" fill="#97b1cb"/>
<path d="M755.8 353.9 L760.3 354.7 L765.5 361.4 L764.8 365.2 L761.8 365.9 L758.1 363.7 L756.6 357.7Z" fill="#6a8fb5"/>
<path d="M755.8 363.7 L761.8 365.2 L761.1 367.4 L757.3 365.9Z" fill="#c0d0e0"/>
<path d="M760.3 354.7 L764.8 349.4 L774.5 348.0 L780.5 352.4 L779.8 359.9 L775.3 361.4 L765.5 361.4Z" fill="#c8c3e1"/>
<path d="M774.5 347.2 L779.0 348.0 L782.7 352.4 L779.8 355.4 L778.3 351.7Z" fill="#474747"/>
<path d="M765.5 361.4 L775.3 361.4 L779.8 359.9 L779.0 366.6 L774.5 368.9 L766.3 368.1 L764.8 365.2Z" fill="#698eb4"/>
<path d="M761.1 367.4 L764.8 365.2 L766.3 368.1 L765.5 369.6 L761.8 369.6Z" fill="#474747"/>
<path d="M757.3 365.9 L761.1 367.4 L761.8 369.6 L760.3 374.1 L758.1 371.9Z" fill="#9fb7cf"/>
<path d="M760.3 374.1 L761.8 369.6 L765.5 369.6 L774.5 368.9 L776.0 371.9 L770.8 372.6 L772.3 378.6 L769.3 383.9 L764.8 382.4 L761.8 377.9ZM764.8 385.3 L772.3 386.1 L770.8 387.6 L764.8 386.8Z" fill="#ccc7e3"/>
<path d="M776.0 368.9 L779.8 366.6 L784.2 368.1 L779.8 371.9Z" fill="#b4add6"/>
<path d="M277.2 428.2 L279.8 427.8 L279.5 429.2 L277.4 429.5ZM282.0 429.6 L283.6 430.2 L283.2 430.9 L282.1 430.5ZM284.4 431.2 L287.6 432.3 L287.2 433.1 L284.6 432.2ZM287.2 434.3 L289.5 435.5 L290.0 436.8 L287.8 438.6 L286.8 436.5Z" fill="#5748a3"/>
<path d="M513.9 423.0 L518.4 423.0 L519.1 424.5 L514.6 425.0Z" fill="#c4d2e1"/>
<path d="M957.4 411.5 L964.8 410.0 L967.8 410.7 L969.3 421.1 L974.5 427.1 L978.2 431.5 L972.3 435.2 L970.8 441.2 L970.0 444.9 L964.8 447.9 L962.6 443.4 L958.9 436.0 L955.9 430.8 L954.5 424.8 L957.4 418.9Z" fill="#beb8db"/>
<path d="M972.3 435.2 L978.2 431.5 L981.2 434.5 L979.7 441.9 L983.4 440.4 L990.1 441.2 L993.8 451.6 L987.1 453.1 L984.9 456.0 L981.9 457.5 L979.7 454.5 L977.5 456.0 L978.2 462.0 L978.2 467.9 L981.2 471.6 L981.9 475.0 L976.0 475.0 L974.5 467.9 L973.8 460.5 L972.3 451.6 L970.8 444.1Z" fill="#b5afd7"/>
<path d="M978.2 431.5 L981.2 427.8 L989.3 424.8 L997.5 430.0 L996.0 432.3 L990.1 434.5 L993.1 441.2 L999.0 447.1 L1004.9 453.1 L1005.7 460.5 L1000.5 466.4 L994.5 470.1 L992.3 464.9 L997.5 462.0 L1000.5 456.0 L994.5 451.6 L990.1 441.2 L983.4 440.4 L979.7 441.9 L981.2 434.5Z" fill="#474747"/>
<path d="M984.9 456.0 L987.1 453.1 L993.8 451.6 L999.0 453.1 L999.0 460.5 L994.5 463.5 L990.1 463.5 L986.4 459.0Z" fill="#cbc6e3"/>
<path d="M1099.2 453.2 L1101.5 452.6 L1102.8 454.4 L1101.5 456.2 L1099.5 455.8Z" fill="#c1d1e0"/>
<path d="M1117.6 504.7 L1123.9 507.1 L1127.1 511.1 L1120.8 509.5ZM1130.3 512.7 L1134.3 517.5 L1132.7 519.1 L1129.5 514.3ZM1108.8 503.1 L1112.8 503.9 L1111.2 504.7Z" fill="#c1d1e0" stroke-width="0.45"/>
<path d="M1111.4 302.2 L1117.0 303.6 L1116.5 304.4 L1111.6 303.2ZM1119.2 311.2 L1123.0 312.0 L1122.6 312.6 L1119.4 311.8ZM1112.6 333.2 L1117.7 335.0 L1117.3 335.8 L1112.8 334.0ZM1126.4 336.0 L1135.2 338.0 L1134.8 338.7 L1126.6 336.8ZM1137.7 336.6 L1144.0 336.4 L1143.8 337.6 L1137.9 337.8ZM1144.7 335.6 L1151.0 334.9 L1150.8 336.2 L1144.9 336.6Z" fill="#5748a3" stroke-width="0.45"/>
<path d="M1090.0 326.2 L1098.2 328.4 L1097.8 329.2 L1090.2 327.0Z" fill="#988fc7" stroke-width="0.45"/>
<path d="M779.3 587.7 L783.8 585.5 L786.0 589.2 L782.3 592.5Z" fill="#aec2d7"/>
<path d="M789.8 577.2 L793.5 576.9 L794.5 581.0 L790.5 581.7Z" fill="#b8cadc"/>
<path d="M487.7 349.0 L498.2 346.0 L504.2 346.7 L499.7 351.2 L493.7 353.5 L489.2 352.0ZM493.7 354.2 L498.9 353.5 L497.4 362.4 L492.2 367.7 L490.7 360.9ZM501.9 352.7 L512.4 355.7 L510.1 364.7 L504.9 362.4 L502.7 358.0ZM501.9 366.9 L514.6 362.4 L521.4 360.9 L513.1 366.9 L504.2 368.4ZM516.9 358.0 L524.4 356.5 L522.1 359.7 L517.6 360.2Z" fill="#ffffff"/>
<path d="M779.7 364.4 L783.5 354.7 L788.0 352.4 L792.4 354.7 L796.2 353.9 L801.4 352.4 L802.9 355.4 L801.4 357.7 L805.9 359.9 L810.4 362.9 L813.4 366.6 L811.9 369.6 L805.9 368.9 L799.9 367.4 L794.7 366.6 L788.7 368.1 L783.5 368.9 L779.7 367.4ZM794.7 353.9 L802.9 351.7 L801.4 355.4 L795.4 355.4Z" fill="#ffffff"/>
<path d="M826.1 356.9 L829.8 353.2 L835.1 351.7 L839.6 352.4 L840.3 356.2 L835.8 358.4 L837.3 362.9 L841.8 365.9 L844.8 367.4 L845.5 371.9 L846.3 382.4 L841.1 382.4 L835.1 379.4 L833.6 371.9 L834.3 368.9 L829.1 362.9 L826.1 359.9Z" fill="#ffffff"/>
<path d="M835.4 403.4 L842.9 409.4 L850.3 413.9 L858.6 413.9 L857.1 419.1 L847.4 421.4 L842.9 419.1 L839.9 413.9Z" fill="#ffffff"/>
<path d="M794.2 497.2 L799.5 495.7 L800.5 502.4 L795.7 504.7ZM788.0 506.2 L789.5 506.2 L791.5 524.9 L790.1 524.9ZM798.4 530.1 L799.9 530.1 L803.2 545.8 L801.7 546.7Z" fill="#ffffff"/></g>
<rect x="1047" y="594" width="201" height="21" fill="#000000"/>
<text x="1050.5" y="610" font-family="Liberation Sans" font-size="15" fill="#ffffff" textLength="193.5" lengthAdjust="spacingAndGlyphs">[10m-1bn] Australia: 22299000</text>
<path d="M1036.5 577.5 L1036.5 593.5 L1040.3 589.8 L1043.2 596.3 L1045.6 595.2 L1042.8 588.8 L1048 588.5 Z" fill="#ffffff" stroke="#000000" stroke-width="1" stroke-linejoin="miter"/>

</svg>
</div></body></html>
